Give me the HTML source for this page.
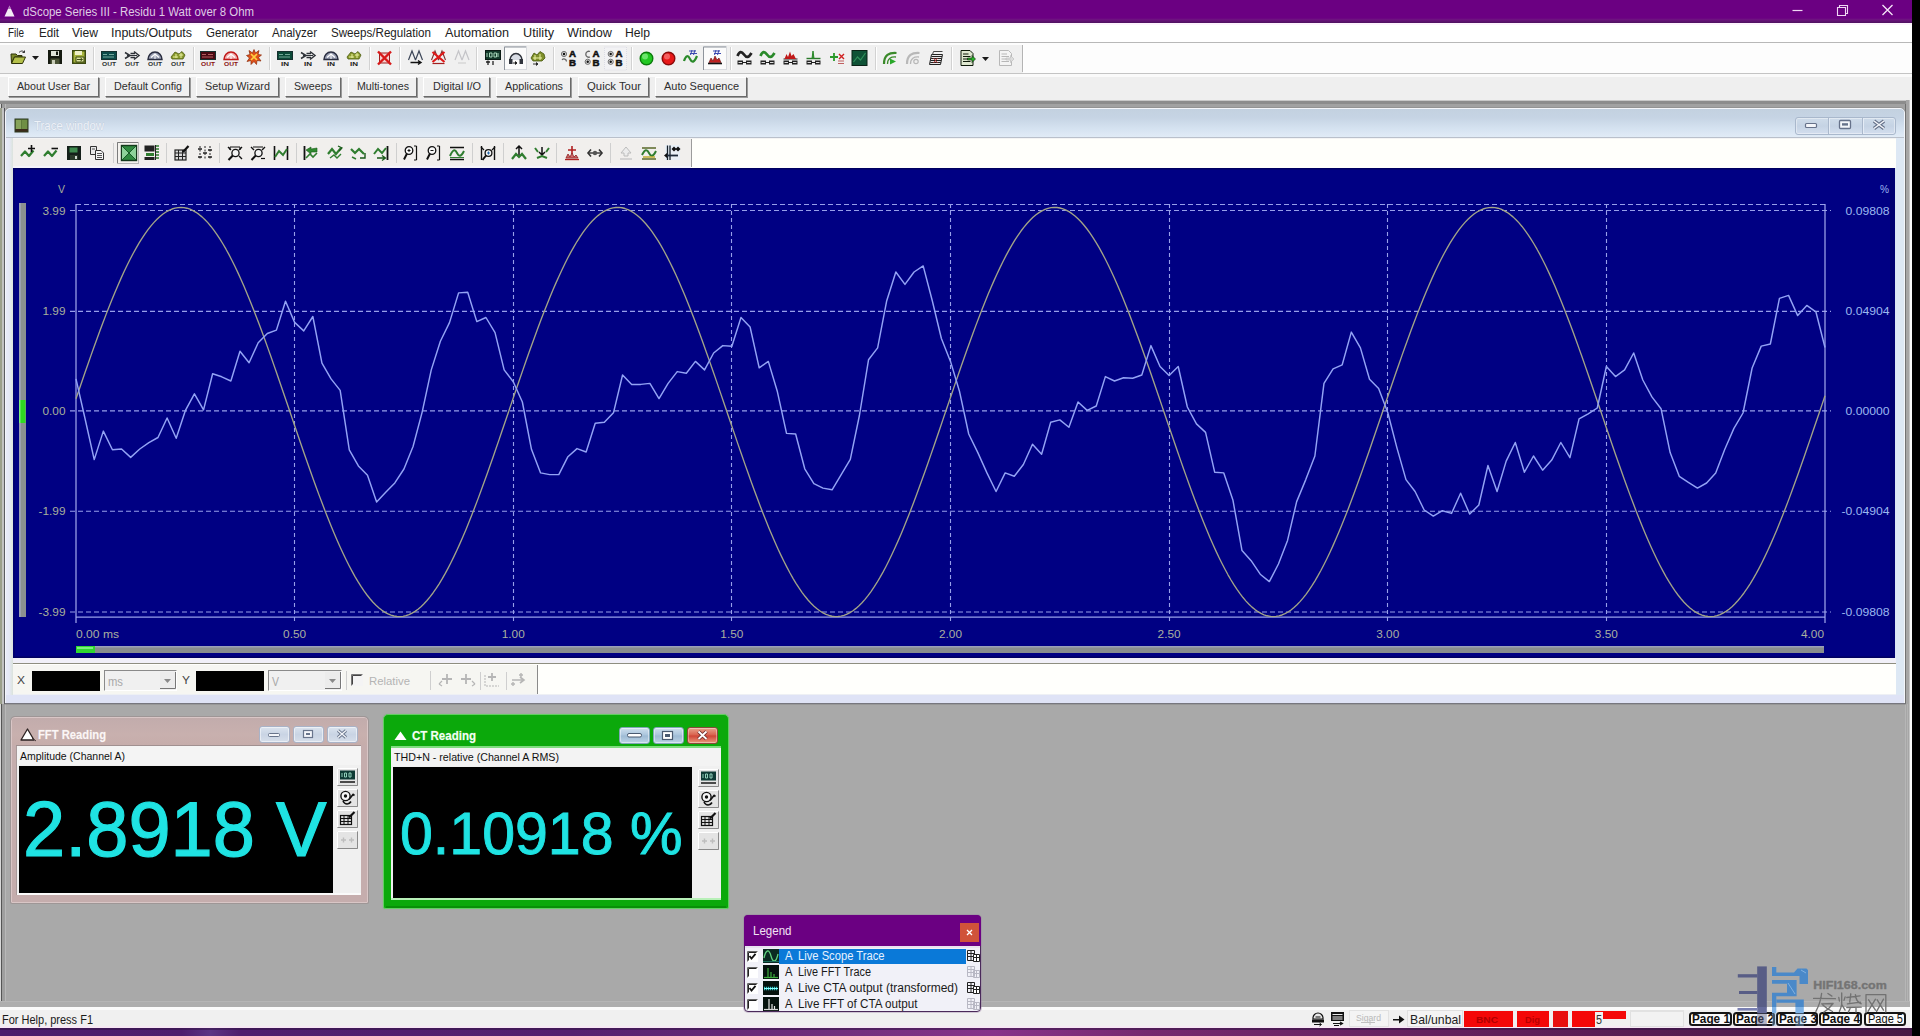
<!DOCTYPE html><html><head><meta charset="utf-8"><title>dScope Series III</title><style>
*{box-sizing:border-box;margin:0;padding:0}
html,body{width:1920px;height:1036px;overflow:hidden;background:#ababab}
body{font-family:"Liberation Sans",sans-serif;font-size:12px;color:#000;position:relative}
.a{position:absolute}
.t{position:absolute;white-space:nowrap;line-height:1}
svg{position:absolute;overflow:visible}

.ub{position:absolute;top:77px;height:20px;background:#f0f0f0;border:1px solid;border-color:#fff #6a6a6a #6a6a6a #fff;box-shadow:1px 1px 0 #9a9a9a}
</style></head><body>
<div class="a" style="left:0px;top:0px;width:1912px;height:23px;background:#6b0082"></div><div class="a" style="left:0;top:18px;width:1912px;height:5px;background:linear-gradient(180deg,#6b0082,#6e1280 30%,#4e1260 100%)"></div><svg style="left:0px;top:0px" width="30" height="22" viewBox="0 0 30 22"><path d="M9.5 5.5 L14.5 16.5 L4.5 16.5 Z" fill="#f4eaf6"/><path d="M9.5 5.5 L11 9 L8 9Z" fill="#6b0082" opacity=".5"/></svg><svg style="left:21px;top:1.6px" width="239" height="21" font-family="Liberation Sans, sans-serif"><text x="2" y="14.4" font-size="12" fill="#dfcce4" textLength="231" lengthAdjust="spacingAndGlyphs">dScope Series III - Residu 1 Watt over 8 Ohm</text></svg><svg style="left:1780px;top:0px" width="132" height="22" viewBox="0 0 132 22"><path d="M12.5 10.5 H22.5" stroke="#f0d8f4" stroke-width="1.2" fill="none"/><path d="M57.5 7.5 H65.5 V15.5 H57.5 Z M59.5 7.5 V5.5 H67.5 V13.5 H65.5" stroke="#f0d8f4" stroke-width="1.1" fill="none"/><path d="M102.5 5 L112.5 15 M112.5 5 L102.5 15" stroke="#f6e6f8" stroke-width="1.3" fill="none"/></svg><div class="a" style="left:1910px;top:100px;width:2px;height:928px;background:#fafafa"></div><div class="a" style="left:1912px;top:0px;width:8px;height:1036px;background:#000"></div><div class="a" style="left:0;top:1028px;width:1912px;height:8px;background:linear-gradient(90deg,#4c1c6c 0,#4f1e6e 9.5%,#5c3584 11%,#4f1e6e 12.5%,#55206f 30%,#74307e 45%,#87338a 52%,#76296f 60%,#5e1e58 80%,#4a1844 100%)"></div><div class="a" style="left:0px;top:1028px;width:1912px;height:2px;background:rgba(50,20,70,.55)"></div>
<div class="a" style="left:0px;top:23px;width:1912px;height:20px;background:#ffffff"></div><div class="a" style="left:0px;top:23px;width:1912px;height:2px;background:#fdf4fd"></div><svg style="left:6px;top:22.6px" width="24" height="21" font-family="Liberation Sans, sans-serif"><text x="2" y="14.4" font-size="12" fill="#222" textLength="16" lengthAdjust="spacingAndGlyphs">File</text></svg><svg style="left:37px;top:22.6px" width="28" height="21" font-family="Liberation Sans, sans-serif"><text x="2" y="14.4" font-size="12" fill="#222" textLength="20" lengthAdjust="spacingAndGlyphs">Edit</text></svg><svg style="left:70px;top:22.6px" width="34" height="21" font-family="Liberation Sans, sans-serif"><text x="2" y="14.4" font-size="12" fill="#222" textLength="26" lengthAdjust="spacingAndGlyphs">View</text></svg><svg style="left:109px;top:22.6px" width="89" height="21" font-family="Liberation Sans, sans-serif"><text x="2" y="14.4" font-size="12" fill="#222" textLength="81" lengthAdjust="spacingAndGlyphs">Inputs/Outputs</text></svg><svg style="left:204px;top:22.6px" width="60" height="21" font-family="Liberation Sans, sans-serif"><text x="2" y="14.4" font-size="12" fill="#222" textLength="52" lengthAdjust="spacingAndGlyphs">Generator</text></svg><svg style="left:270px;top:22.6px" width="53" height="21" font-family="Liberation Sans, sans-serif"><text x="2" y="14.4" font-size="12" fill="#222" textLength="45" lengthAdjust="spacingAndGlyphs">Analyzer</text></svg><svg style="left:329px;top:22.6px" width="108" height="21" font-family="Liberation Sans, sans-serif"><text x="2" y="14.4" font-size="12" fill="#222" textLength="100" lengthAdjust="spacingAndGlyphs">Sweeps/Regulation</text></svg><svg style="left:443px;top:22.6px" width="72" height="21" font-family="Liberation Sans, sans-serif"><text x="2" y="14.4" font-size="12" fill="#222" textLength="64" lengthAdjust="spacingAndGlyphs">Automation</text></svg><svg style="left:521px;top:22.6px" width="39" height="21" font-family="Liberation Sans, sans-serif"><text x="2" y="14.4" font-size="12" fill="#222" textLength="31" lengthAdjust="spacingAndGlyphs">Utility</text></svg><svg style="left:565px;top:22.6px" width="53" height="21" font-family="Liberation Sans, sans-serif"><text x="2" y="14.4" font-size="12" fill="#222" textLength="45" lengthAdjust="spacingAndGlyphs">Window</text></svg><svg style="left:623px;top:22.6px" width="33" height="21" font-family="Liberation Sans, sans-serif"><text x="2" y="14.4" font-size="12" fill="#222" textLength="25" lengthAdjust="spacingAndGlyphs">Help</text></svg><div class="a" style="left:0px;top:42px;width:1912px;height:1px;background:#b8b8b8"></div>
<div class="a" style="left:0px;top:43px;width:1912px;height:31px;background:#fdfdfd"></div><div class="a" style="left:0px;top:45px;width:1023px;height:28px;background:#f0f0f0"></div><div class="a" style="left:0px;top:73px;width:1912px;height:1px;background:#c4c4c4"></div><div class="a" style="left:0px;top:74px;width:1912px;height:3px;background:#fafafa"></div><svg style="left:0;top:0" width="1100" height="76" viewBox="0 0 1100 76" font-family="Liberation Sans, sans-serif"><g transform="translate(10,49)"><path d="M1 5 H6 L7.5 6.5 H12 V8 H4.5 L1.5 14 Z" fill="#7c8a2a" stroke="#2e3408" stroke-width="1"/><path d="M4.5 8 H15.5 L12.5 14.5 H1.5 Z" fill="#b4c04a" stroke="#2e3408" stroke-width="1"/><path d="M9 3.5 C11 1.5 13 1.5 14.5 3.5 M14.5 3.5 V1.5 M14.5 3.5 H12.5" stroke="#333" stroke-width="1" fill="none"/></g><g transform="translate(32,50)"><path d="M0 6 H7 L3.5 10 Z" fill="#1a1a1a"/></g><g transform="translate(47,49)"><rect x="1" y="1" width="14" height="14" fill="#151a10"/><rect x="4" y="2" width="8" height="5" fill="#dfe4d8"/><rect x="9" y="2.5" width="2" height="3.5" fill="#151a10"/><rect x="3.5" y="9.5" width="9" height="5.5" fill="#4a5236"/><rect x="5" y="11" width="3" height="4" fill="#c8ccb8"/></g><g transform="translate(71,49)"><rect x="1" y="1" width="14" height="14" fill="#3c4a12"/><rect x="2.5" y="2.5" width="11" height="11" fill="#a6b43c"/><rect x="4" y="2" width="7" height="4" fill="#eef0c8"/><path d="M5 8 H13 V13 H5Z" fill="#dfe6a0" stroke="#3c4a12" stroke-width="1"/><path d="M6 10.5 H11 M9.5 9 L11.5 10.5 L9.5 12" stroke="#3c4a12" stroke-width="1" fill="none"/></g><path d="M93.5 47 V70" stroke="#d2d2d2" stroke-width="1"/><path d="M94.5 47 V70" stroke="#fff" stroke-width="1"/><g transform="translate(101,50)"><rect x="0.5" y="1.5" width="15" height="8" fill="#0c4a48" stroke="#16302e" stroke-width="1"/><path d="M2 4.5 H6 M8 4.5 H13 M2 7 H13" stroke="#9fd0c0" stroke-width="1" opacity=".7"/><text x="1" y="15.5" font-size="6.2" font-weight="bold" fill="#2c3030" textLength="14" lengthAdjust="spacingAndGlyphs">OUT</text></g><g transform="translate(124,50)"><path d="M1 2.5 L6 5.5 L1 8.5 M6.5 3.5 H11 M6.5 7.5 H11 M10 1.5 L15 5.5 L10 9.5" stroke="#2e3238" stroke-width="1.5" fill="none"/><path d="M3 5.5 H13" stroke="#2e3238" stroke-width="1"/><text x="1" y="15.5" font-size="6.2" font-weight="bold" fill="#2c3030" textLength="14" lengthAdjust="spacingAndGlyphs">OUT</text></g><g transform="translate(147,50)"><path d="M1 9.5 A7 7.5 0 0 1 15 9.5 Z" fill="#9aa0b4" stroke="#2a2e40" stroke-width="1.5"/><path d="M4 7.5 L8 4 L12 7.5" stroke="#fff" stroke-width="1.1" fill="none"/><path d="M8 9 V5" stroke="#fff" stroke-width="1"/><text x="1" y="15.5" font-size="6.2" font-weight="bold" fill="#2c3030" textLength="14" lengthAdjust="spacingAndGlyphs">OUT</text></g><g transform="translate(170,50)"><path d="M1 7 L5 2 L9 4 L12 1.5 L15 5 L13 9 H2 Z" fill="#8a9a2e" stroke="#4a5a10" stroke-width=".8"/><path d="M3 7 H8 M9 5 H13 M6 4 V8 M11 3 V8" stroke="#e8f0a0" stroke-width="1"/><text x="1" y="15.5" font-size="6.2" font-weight="bold" fill="#2c3030" textLength="14" lengthAdjust="spacingAndGlyphs">OUT</text></g><path d="M193.5 47 V70" stroke="#d2d2d2" stroke-width="1"/><path d="M194.5 47 V70" stroke="#fff" stroke-width="1"/><g transform="translate(200,50)"><rect x="0.5" y="1.5" width="15" height="8" fill="#4a0a12" stroke="#16302e" stroke-width="1"/><path d="M2 4.5 H6 M8 4.5 H13 M2 7 H13" stroke="#e08080" stroke-width="1" opacity=".7"/><text x="1" y="15.5" font-size="6.2" font-weight="bold" fill="#8a1010" textLength="14" lengthAdjust="spacingAndGlyphs">OUT</text></g><g transform="translate(223,50)"><path d="M1 9.5 A7 7.5 0 0 1 15 9.5 Z" fill="#f0b0b0" stroke="#c01818" stroke-width="1.5"/><path d="M4 7.5 L8 4 L12 7.5" stroke="#fff" stroke-width="1.1" fill="none"/><path d="M8 9 V5" stroke="#fff" stroke-width="1"/><text x="1" y="15.5" font-size="6.2" font-weight="bold" fill="#8a1010" textLength="14" lengthAdjust="spacingAndGlyphs">OUT</text></g><g transform="translate(246,49)"><path d="M8 0.5 L9.5 4 L13 1.5 L12 5.5 L15.5 6 L12.5 8.5 L15 12 L11 11.5 L10.5 15.5 L8 12.5 L5 15.5 L5 11.5 L1 12.5 L3.5 9 L0.5 6.5 L4 5.5 L3 1.5 L6.5 4 Z" fill="#e0501a" stroke="#8a2a08" stroke-width=".7"/><path d="M5 5 L11 11 M11 5 L5 11" stroke="#ffd040" stroke-width="1.6"/></g><path d="M269.5 47 V70" stroke="#d2d2d2" stroke-width="1"/><path d="M270.5 47 V70" stroke="#fff" stroke-width="1"/><g transform="translate(277,50)"><rect x="0.5" y="1.5" width="15" height="8" fill="#0c4a38" stroke="#16302e" stroke-width="1"/><path d="M2 4.5 H6 M8 4.5 H13 M2 7 H13" stroke="#9fd0c0" stroke-width="1" opacity=".7"/><text x="4" y="15.5" font-size="6.2" font-weight="bold" fill="#1c2420" textLength="8" lengthAdjust="spacingAndGlyphs">IN</text></g><g transform="translate(300,50)"><path d="M1 2.5 L6 5.5 L1 8.5 M6.5 3.5 H11 M6.5 7.5 H11 M10 1.5 L15 5.5 L10 9.5" stroke="#2e3238" stroke-width="1.5" fill="none"/><path d="M3 5.5 H13" stroke="#2e3238" stroke-width="1"/><text x="4" y="15.5" font-size="6.2" font-weight="bold" fill="#1c2420" textLength="8" lengthAdjust="spacingAndGlyphs">IN</text></g><g transform="translate(323,50)"><path d="M1 9.5 A7 7.5 0 0 1 15 9.5 Z" fill="#9aa0b4" stroke="#2a2e40" stroke-width="1.5"/><path d="M4 7.5 L8 4 L12 7.5" stroke="#fff" stroke-width="1.1" fill="none"/><path d="M8 9 V5" stroke="#fff" stroke-width="1"/><text x="4" y="15.5" font-size="6.2" font-weight="bold" fill="#1c2420" textLength="8" lengthAdjust="spacingAndGlyphs">IN</text></g><g transform="translate(346,50)"><path d="M1 7 L5 2 L9 4 L12 1.5 L15 5 L13 9 H2 Z" fill="#8a9a2e" stroke="#4a5a10" stroke-width=".8"/><path d="M3 7 H8 M9 5 H13 M6 4 V8 M11 3 V8" stroke="#e8f0a0" stroke-width="1"/><text x="4" y="15.5" font-size="6.2" font-weight="bold" fill="#1c2420" textLength="8" lengthAdjust="spacingAndGlyphs">IN</text></g><path d="M369.5 47 V70" stroke="#d2d2d2" stroke-width="1"/><path d="M370.5 47 V70" stroke="#fff" stroke-width="1"/><g transform="translate(376.5,50)"><rect x="3" y="3" width="10" height="10" fill="#f4d0d0" stroke="#a02020" stroke-width="1"/><path d="M1.5 1.5 L14.5 14.5 M14.5 1.5 L1.5 14.5" stroke="#d81818" stroke-width="2.4"/></g><path d="M399.5 47 V70" stroke="#d2d2d2" stroke-width="1"/><path d="M400.5 47 V70" stroke="#fff" stroke-width="1"/><g transform="translate(407.5,49)"><path d="M1 11 L4.5 2 L8 11 M8 11 L11.5 2 L15 11" stroke="#3c4658" stroke-width="1.2" fill="none"/><path d="M3 13.5 H13 M10.5 11.5 L13.5 13.5 L10.5 15.5" stroke="#111" stroke-width="1.4" fill="none"/></g><g transform="translate(430.5,49)"><path d="M1 11 L4.5 2 L8 11 M8 11 L11.5 2 L15 11" stroke="#7a3030" stroke-width="1.1" fill="none"/><path d="M2 3 L14 13 M14 3 L2 13" stroke="#e01818" stroke-width="2.2"/><path d="M2 14.5 H14" stroke="#a02020" stroke-width="1.2"/></g><g transform="translate(454,49)"><path d="M1 11 L4.5 2 L8 11 M8 11 L11.5 2 L15 11" stroke="#c4c4c8" stroke-width="1.2" fill="none"/><path d="M4 14 H12" stroke="#d0d0d0" stroke-width="1.2"/></g><path d="M476.5 47 V70" stroke="#d2d2d2" stroke-width="1"/><path d="M477.5 47 V70" stroke="#fff" stroke-width="1"/><g transform="translate(485,50)"><rect x="0.5" y="0.5" width="15" height="9" fill="#123a2a" stroke="#0a1a14" stroke-width="1"/><path d="M2 3 V7 M4.5 3 H7 V7 H4.5 Z M9 3 H11.5 V7 H9 Z M13 3 V7" stroke="#b8e8c8" stroke-width=".9" fill="none"/><path d="M1 12 H5 M3 10.5 V15 M8 11 V15" stroke="#222" stroke-width="1.3"/></g><rect x="504.5" y="46.5" width="22" height="23" fill="#fbfbfb" stroke="#d8dade" stroke-width="1"/><path d="M504.5 70 V47 H526" stroke="#8e949c" stroke-width="1" fill="none"/><g transform="translate(508,50)"><path d="M2 10 A6 6.5 0 0 1 14 10" stroke="#30343c" stroke-width="1.5" fill="#d8dce4"/><rect x="1" y="9" width="3.5" height="5" fill="#30343c"/><rect x="11.5" y="9" width="3.5" height="5" fill="#30343c"/><path d="M5 13 H9 M7 11.5 L9 13 L7 14.5" stroke="#222" stroke-width="1"/></g><g transform="translate(530,50)"><path d="M1 8 L4 3 L7 5 L10 1.5 L14 4 L15 8 L12 11 H3 Z" fill="#7f8f2a" stroke="#48580c" stroke-width=".8"/><path d="M3 8 H12 M5 5 V10 M10 4 V10" stroke="#eef4a8" stroke-width="1"/><path d="M3 14 H8 M6 12.5 L8 14 L6 15.5" stroke="#333" stroke-width="1"/></g><path d="M553.5 47 V70" stroke="#d2d2d2" stroke-width="1"/><path d="M554.5 47 V70" stroke="#fff" stroke-width="1"/><g transform="translate(560.5,50)"><circle cx="3.5" cy="4" r="2.6" fill="#d8d8d8" stroke="#555" stroke-width=".8"/><circle cx="3.5" cy="4" r="1.2" fill="#111"/><path d="M1.5 10 A2.5 2.5 0 0 1 6 11.5" stroke="#666" stroke-width="1.2" fill="none"/><text x="8.5" y="7.3" font-size="8.5" font-weight="bold" fill="#111" stroke="#111" stroke-width=".5" textLength="7" lengthAdjust="spacingAndGlyphs">A</text><text x="8.5" y="15.6" font-size="8.5" font-weight="bold" fill="#111" stroke="#111" stroke-width=".5" textLength="7" lengthAdjust="spacingAndGlyphs">B</text></g><g transform="translate(584,50)"><path d="M6 1.5 A3 3 0 1 0 6 7" stroke="#666" stroke-width="1.3" fill="none"/><circle cx="3.7" cy="11.8" r="2.6" fill="#d8d8d8" stroke="#555" stroke-width=".8"/><circle cx="3.7" cy="11.8" r="1.2" fill="#111"/><text x="8.5" y="7.3" font-size="8.5" font-weight="bold" fill="#111" stroke="#111" stroke-width=".5" textLength="7" lengthAdjust="spacingAndGlyphs">A</text><text x="8.5" y="15.6" font-size="8.5" font-weight="bold" fill="#111" stroke="#111" stroke-width=".5" textLength="7" lengthAdjust="spacingAndGlyphs">B</text></g><rect x="604.5" y="47" width="22" height="23" fill="#f2f2f4" stroke="#dcdce4" stroke-width="1" stroke-dasharray="1 1"/><g transform="translate(607,50)"><circle cx="3.7" cy="4" r="2.6" fill="#d8d8d8" stroke="#555" stroke-width=".8"/><circle cx="3.7" cy="4" r="1.2" fill="#111"/><circle cx="3.7" cy="11.8" r="2.6" fill="#d8d8d8" stroke="#555" stroke-width=".8"/><circle cx="3.7" cy="11.8" r="1.2" fill="#111"/><text x="8.5" y="7.3" font-size="8.5" font-weight="bold" fill="#111" stroke="#111" stroke-width=".5" textLength="7" lengthAdjust="spacingAndGlyphs">A</text><text x="8.5" y="15.6" font-size="8.5" font-weight="bold" fill="#111" stroke="#111" stroke-width=".5" textLength="7" lengthAdjust="spacingAndGlyphs">B</text></g><path d="M631.5 47 V70" stroke="#d2d2d2" stroke-width="1"/><path d="M632.5 47 V70" stroke="#fff" stroke-width="1"/><g transform="translate(638.5,50)"><circle cx="8" cy="8.5" r="6.3" fill="#22c822" stroke="#0a7a0a" stroke-width="1.4"/><circle cx="6.5" cy="6.5" r="3" fill="#a8ffa8" opacity=".55"/></g><g transform="translate(660.5,50)"><circle cx="8" cy="8.5" r="6.3" fill="#e81818" stroke="#8a0a0a" stroke-width="1.4"/><circle cx="6.5" cy="6.5" r="3" fill="#ff9a9a" opacity=".55"/></g><g transform="translate(683,49)"><path d="M1 12 C3 6 5 6 7 10 S11 14 14 7" stroke="#2a8a2a" stroke-width="2.2" fill="none"/><path d="M6 2 H13 M7 4.5 H14 M9 1 L7.5 6 M12 1 L10.5 6" stroke="#3a48b0" stroke-width="1"/></g><rect x="703.5" y="46.5" width="23" height="23" fill="#fbfbfb" stroke="#d8dade" stroke-width="1"/><path d="M703.5 70 V47 H726" stroke="#8e949c" stroke-width="1" fill="none"/><g transform="translate(707,49)"><path d="M1 14.5 H15" stroke="#111" stroke-width="1.6"/><path d="M2 13.5 L4 9 L6 12 L8 7 L10 11 L12 9 L14 13.5 Z" fill="#c02020" stroke="#601010" stroke-width=".6"/><path d="M6 2 H13 M7 4.5 H14 M9 1 L7.5 6 M12 1 L10.5 6" stroke="#3a48b0" stroke-width="1"/></g><path d="M730.5 47 V70" stroke="#d2d2d2" stroke-width="1"/><path d="M731.5 47 V70" stroke="#fff" stroke-width="1"/><g transform="translate(736.5,50)"><path d="M1 6 C3 1 5 1 7.5 4.5 S12 8 15 3" stroke="#222" stroke-width="2.7" fill="none"/><rect x="1" y="10.5" width="5.5" height="4" fill="#222"/><rect x="9.5" y="10.5" width="5.5" height="4" fill="#222"/><path d="M2 12.5 H5.5 M10.5 12.5 H14" stroke="#ddd" stroke-width="1"/><path d="M6.5 12.5 H9.5" stroke="#222"/></g><g transform="translate(759.5,50)"><path d="M1 6 C3 1 5 1 7.5 4.5 S12 8 15 3" stroke="#2a8a2a" stroke-width="2.7" fill="none"/><rect x="1" y="10.5" width="5.5" height="4" fill="#222"/><rect x="9.5" y="10.5" width="5.5" height="4" fill="#222"/><path d="M2 12.5 H5.5 M10.5 12.5 H14" stroke="#ddd" stroke-width="1"/><path d="M6.5 12.5 H9.5" stroke="#222"/></g><g transform="translate(782.5,50)"><path d="M1 9 H15" stroke="#222" stroke-width="1"/><path d="M2 9 L4 4 L5.5 7 L7.5 1.5 L9 6 L11 4 L13.5 9 Z" fill="#c01818"/><rect x="1" y="10.5" width="5.5" height="4" fill="#222"/><rect x="9.5" y="10.5" width="5.5" height="4" fill="#222"/><path d="M2 12.5 H5.5 M10.5 12.5 H14" stroke="#ddd" stroke-width="1"/><path d="M6.5 12.5 H9.5" stroke="#222"/></g><g transform="translate(805.5,50)"><path d="M1 8.5 H15" stroke="#2a7a2a" stroke-width="1.4"/><path d="M6.5 8.5 L7.5 1 L8.5 8.5 Z" fill="#2a8a2a" stroke="#2a8a2a"/><rect x="1" y="10.5" width="5.5" height="4" fill="#222"/><rect x="9.5" y="10.5" width="5.5" height="4" fill="#222"/><path d="M2 12.5 H5.5 M10.5 12.5 H14" stroke="#ddd" stroke-width="1"/><path d="M6.5 12.5 H9.5" stroke="#222"/></g><g transform="translate(829,50)"><path d="M1 7 H9 M5 3 V11" stroke="#2a9a2a" stroke-width="1.8"/><path d="M10 4 L15 9 M15 4 L10 9" stroke="#d02020" stroke-width="1.4"/><path d="M9 11 H15 M9 13.5 H15" stroke="#c06060" stroke-width="1"/></g><g transform="translate(851.5,50)"><rect x="0.5" y="0.5" width="15" height="15" fill="#0f5236" stroke="#0a2216" stroke-width="1"/><path d="M2 12 L6 7 L9 10 L14 3" stroke="#2f8f5a" stroke-width="1.2" fill="none"/></g><path d="M875.5 47 V70" stroke="#d2d2d2" stroke-width="1"/><path d="M876.5 47 V70" stroke="#fff" stroke-width="1"/><g transform="translate(882,50)"><path d="M2 14 C2 5 7 2.5 14.5 3" stroke="#3a8a2a" stroke-width="2.2" fill="none"/><path d="M5.5 14 C5.5 8.5 9 6.5 14 7" stroke="#3a8a2a" stroke-width="1.3" fill="none"/><path d="M8 8.5 L14 11.5 L8 14.5 Z" fill="#2aa82a"/></g><g transform="translate(905,50)"><path d="M2 14 C2 5 7 2.5 14.5 3" stroke="#b8b8b8" stroke-width="2.2" fill="none"/><path d="M5.5 14 C5.5 8.5 9 6.5 14 7" stroke="#b8b8b8" stroke-width="1.3" fill="none"/><circle cx="11" cy="11.5" r="2.2" fill="none" stroke="#b8b8b8" stroke-width="1.2"/></g><g transform="translate(927.5,50)"><path d="M2 14.5 L4 4.5 H15 L13 14.5 Z" fill="#e8e8e8" stroke="#222" stroke-width="1"/><path d="M4 6.5 H14.5 M3.6 8.5 H14 M3.2 10.5 H13.6 M2.8 12.5 H13.2" stroke="#222" stroke-width="1"/><path d="M5 4.5 L6 1.5 H15" stroke="#444" fill="none"/><path d="M6 8 L10 13 M10 8 L6 13" stroke="#b03030" stroke-width="1"/></g><path d="M951.5 47 V70" stroke="#d2d2d2" stroke-width="1"/><path d="M952.5 47 V70" stroke="#fff" stroke-width="1"/><g transform="translate(959.5,50)"><path d="M1.5 0.5 H10.5 L13.5 3.5 V15.5 H1.5 Z" fill="#dfe8d0" stroke="#0e1a0a" stroke-width="1"/><path d="M3.5 4 H9 M3.5 6.5 H11 M3.5 9 H11 M3.5 11.5 H11" stroke="#0e1a0a" stroke-width="1"/><path d="M8 8 H12.5 V5.5 L16 9 L12.5 12.5 V10 H8 Z" fill="#27b027" stroke="#0e1a0a" stroke-width=".6"/></g><g transform="translate(982,51)"><path d="M0 6 H7 L3.5 10 Z" fill="#1a1a1a"/></g><g transform="translate(998,50)"><path d="M1.5 0.5 H10.5 L13.5 3.5 V15.5 H1.5 Z" fill="#f4f4f4" stroke="#b8b8b8" stroke-width="1"/><path d="M3.5 4 H9 M3.5 6.5 H11 M3.5 9 H11 M3.5 11.5 H11" stroke="#b8b8b8" stroke-width="1"/><path d="M8 8 H12.5 V5.5 L16 9 L12.5 12.5 V10 H8 Z" fill="#dcdcdc" stroke="#b8b8b8" stroke-width=".6"/></g><path d="M1022.5 45 V72" stroke="#b4b4b4" stroke-width="1"/><path d="M1023.5 45 V72" stroke="#fff" stroke-width="1"/></svg>
<div class="a" style="left:0px;top:77px;width:1912px;height:23px;background:#efefef"></div><div class="ub" style="left:8px;width:91px"></div><svg style="left:15px;top:77.3px" width="81" height="19" font-family="Liberation Sans, sans-serif"><text x="2" y="13.2" font-size="11" fill="#2e2e2e" textLength="73" lengthAdjust="spacingAndGlyphs">About User Bar</text></svg><div class="ub" style="left:105px;width:85px"></div><svg style="left:111.5px;top:77.3px" width="76" height="19" font-family="Liberation Sans, sans-serif"><text x="2" y="13.2" font-size="11" fill="#2e2e2e" textLength="68" lengthAdjust="spacingAndGlyphs">Default Config</text></svg><div class="ub" style="left:196px;width:83px"></div><svg style="left:203px;top:77.3px" width="73" height="19" font-family="Liberation Sans, sans-serif"><text x="2" y="13.2" font-size="11" fill="#2e2e2e" textLength="65" lengthAdjust="spacingAndGlyphs">Setup Wizard</text></svg><div class="ub" style="left:285px;width:56px"></div><svg style="left:292px;top:77.3px" width="46" height="19" font-family="Liberation Sans, sans-serif"><text x="2" y="13.2" font-size="11" fill="#2e2e2e" textLength="38" lengthAdjust="spacingAndGlyphs">Sweeps</text></svg><div class="ub" style="left:348px;width:69px"></div><svg style="left:354.5px;top:77.3px" width="60" height="19" font-family="Liberation Sans, sans-serif"><text x="2" y="13.2" font-size="11" fill="#2e2e2e" textLength="52" lengthAdjust="spacingAndGlyphs">Multi-tones</text></svg><div class="ub" style="left:423px;width:67px"></div><svg style="left:430.5px;top:77.3px" width="56" height="19" font-family="Liberation Sans, sans-serif"><text x="2" y="13.2" font-size="11" fill="#2e2e2e" textLength="48" lengthAdjust="spacingAndGlyphs">Digital I/O</text></svg><div class="ub" style="left:496px;width:75px"></div><svg style="left:502.5px;top:77.3px" width="66" height="19" font-family="Liberation Sans, sans-serif"><text x="2" y="13.2" font-size="11" fill="#2e2e2e" textLength="58" lengthAdjust="spacingAndGlyphs">Applications</text></svg><div class="ub" style="left:578px;width:71px"></div><svg style="left:584.5px;top:77.3px" width="62" height="19" font-family="Liberation Sans, sans-serif"><text x="2" y="13.2" font-size="11" fill="#2e2e2e" textLength="54" lengthAdjust="spacingAndGlyphs">Quick Tour</text></svg><div class="ub" style="left:655px;width:92px"></div><svg style="left:661.5px;top:77.3px" width="83" height="19" font-family="Liberation Sans, sans-serif"><text x="2" y="13.2" font-size="11" fill="#2e2e2e" textLength="75" lengthAdjust="spacingAndGlyphs">Auto Sequence</text></svg>
<div class="a" style="left:0px;top:100px;width:1910px;height:908px;background:#a9a9a9"></div><div class="a" style="left:0px;top:100px;width:1910px;height:1px;background:#c8c8c8"></div><div class="a" style="left:0px;top:101px;width:1910px;height:3px;background:#8c8c8c"></div><div class="a" style="left:0px;top:104px;width:1910px;height:4px;background:#a2a2a2"></div><div class="a" style="left:0px;top:104px;width:1px;height:904px;background:#d8d8d8"></div><div class="a" style="left:1px;top:104px;width:1px;height:904px;background:#555"></div><div class="a" style="left:2px;top:104px;width:3px;height:904px;background:#9e9e9e"></div><div class="a" style="left:5px;top:104px;width:1px;height:904px;background:#b8b8b8"></div><div class="a" style="left:0px;top:108px;width:1.5px;height:596px;background:#9ca08c"></div><div class="a" style="left:1.5px;top:108px;width:2.5px;height:596px;background:#c2c2c2"></div><div class="a" style="left:4px;top:108px;width:1px;height:596px;background:#4e4e58"></div><div class="a" style="left:1905px;top:104px;width:1px;height:600px;background:#707070"></div><div class="a" style="left:1905px;top:704px;width:1px;height:304px;background:#b6b6b6"></div><div class="a" style="left:1906px;top:100px;width:3px;height:908px;background:#a6a6a6"></div><div class="a" style="left:1907px;top:704px;width:1px;height:304px;background:#b4b4b4"></div><div class="a" style="left:1909px;top:100px;width:1px;height:908px;background:#c4c4c4"></div><div class="a" style="left:0px;top:1001px;width:1910px;height:1px;background:#b6b6b6"></div><div class="a" style="left:0px;top:1002px;width:1910px;height:5px;background:#aeaeae"></div>
<div class="a" style="left:5px;top:108px;width:1900px;height:596px;background:#dbe5f3;border:1px solid #f4f6fa;border-radius:5px 5px 0 0;box-shadow:0 0 0 1px rgba(120,120,120,.35)"></div><div class="a" style="left:6px;top:109px;width:1898px;height:29px;border-radius:4px 4px 0 0;background:linear-gradient(180deg,#c3d1e0 0,#c6d4e4 30%,#d6e3f1 70%,#e2ecf7 100%)"></div><div class="a" style="left:6px;top:137px;width:1898px;height:1px;background:#b9c0cb"></div><div class="a" style="left:6px;top:138px;width:7px;height:565px;background:linear-gradient(90deg,#e9ebfb 0,#e6e9f6 45%,#dbe3dc 100%)"></div><div class="a" style="left:1896px;top:138px;width:8px;height:565px;background:#dde8f4"></div><div class="a" style="left:6px;top:695px;width:1898px;height:8px;background:#dfe3f6"></div><div class="a" style="left:5px;top:703px;width:1900px;height:1px;background:#77777f"></div><svg style="left:14px;top:118px" width="16" height="16" viewBox="0 0 16 16"><rect x="1" y="1" width="13" height="13" fill="#5d7a3a"/><rect x="1" y="11" width="13" height="3" fill="#3a2a1a"/><rect x="2" y="2" width="5" height="9" fill="#86a35a"/><rect x="8" y="2" width="5" height="9" fill="#6f8f45"/><rect x="1" y="1" width="13" height="13" fill="none" stroke="#2e3a20" stroke-width="1"/></svg><svg style="left:32px;top:115.6px" width="78" height="21" font-family="Liberation Sans, sans-serif"><text x="2" y="14.4" font-size="12" fill="#eef2f8" textLength="70" lengthAdjust="spacingAndGlyphs" stroke="#b6c2d2" stroke-width=".5" paint-order="stroke">Trace window</text></svg><div class="a" style="left:1795px;top:117px;width:101px;height:18px;border:1px solid #a9b8cc;border-radius:3px;background:linear-gradient(180deg,#cfdcea,#c5d3e4 50%,#d3deee);box-shadow:inset 0 0 0 1px rgba(255,255,255,.4)"></div><div class="a" style="left:1827.5px;top:118px;width:1px;height:16px;background:#aab8cc"></div><div class="a" style="left:1828.5px;top:118px;width:1px;height:16px;background:#e4ecf6"></div><div class="a" style="left:1861.5px;top:118px;width:1px;height:16px;background:#aab8cc"></div><div class="a" style="left:1862.5px;top:118px;width:1px;height:16px;background:#e4ecf6"></div><svg style="left:1795px;top:117px" width="101" height="18" viewBox="0 0 101 18"><rect x="10.5" y="6.5" width="11" height="4" rx="1" fill="#f4f6fa" stroke="#66728a" stroke-width="1.2"/><rect x="44.5" y="3.5" width="11" height="8" rx="1" fill="#f4f6fa" stroke="#66728a" stroke-width="1.3"/><rect x="47" y="6.2" width="6" height="2.4" fill="#66728a"/><path d="M79 4 L89 11.5 M89 4 L79 11.5" stroke="#66728a" stroke-width="3.6" fill="none"/><path d="M79 4 L89 11.5 M89 4 L79 11.5" stroke="#f4f6fa" stroke-width="1.5" fill="none"/></svg><div class="a" style="left:13px;top:138px;width:1883px;height:30px;background:#fffffb"></div><div class="a" style="left:13px;top:138px;width:1883px;height:1px;background:#f4f4f4"></div><div class="a" style="left:13px;top:139px;width:678.5px;height:28px;background:#f1efed"></div><div class="a" style="left:691px;top:139px;width:1px;height:28px;background:#9c9c9c"></div><div class="a" style="left:13px;top:166px;width:678px;height:1.5px;background:#f4f3fa"></div><svg style="left:0;top:0" width="700" height="170" viewBox="0 0 700 170"><g transform="translate(20,145)"><path d="M1 11 L5 6.5 L9 11 L13.5 5.5" stroke="#2f7d2f" stroke-width="2.2" fill="none" stroke-linejoin="round"/><path d="M8 3.5 H15 M11.5 0 V7" stroke="#111" stroke-width="1.6"/></g><g transform="translate(43,145)"><path d="M1 11 L5 6.5 L9 11 L13.5 5.5" stroke="#2f7d2f" stroke-width="2.2" fill="none" stroke-linejoin="round"/><path d="M8.5 3.5 H15" stroke="#111" stroke-width="1.6"/></g><g transform="translate(66,145)"><rect x="1" y="1" width="14" height="14" fill="#15201a"/><rect x="3.5" y="2.5" width="8" height="5" fill="#3f8a4f"/><rect x="4" y="10" width="8" height="5" fill="#2a3a2a"/><rect x="9" y="11" width="2" height="3" fill="#cfd8cf"/></g><g transform="translate(89,145)"><path d="M1.5 1.5 H7.5 V9.5 H1.5 Z" fill="#e8e8e8" stroke="#333"/><path d="M6.5 5.5 H12 L14.5 8 V14.5 H6.5 Z" fill="#f4f4f4" stroke="#333"/><path d="M8 8.5 H13 M8 10.5 H13 M8 12.5 H13 M3 4 H6" stroke="#555" stroke-width="1"/></g><path d="M113.5 143 V163" stroke="#cfcfcf" stroke-width="1"/><rect x="117.5" y="142.5" width="21" height="21" fill="#f4f2ee" stroke="#b8b8b8"/><path d="M117.5 163 V142.5 H138" stroke="#7c7c7c" fill="none"/><g transform="translate(121,145)"><rect x="0.5" y="0.5" width="15" height="15" fill="#2f8a3f" stroke="#143a1c" stroke-width="1.4"/><path d="M1 1 L8 8 L1 15 Z M15 1 L8 8 L15 15 Z" fill="#9fdfaa" opacity=".85"/><path d="M1 1 L15 15 M15 1 L1 15" stroke="#1a5a2a" stroke-width="1"/></g><g transform="translate(144,145)"><rect x="0.5" y="0.5" width="10" height="6" fill="#222"/><rect x="2" y="8" width="8" height="3" fill="#2f7d2f"/><rect x="0.5" y="12" width="10" height="3" fill="#222"/><path d="M12 1 H15 M12 4 H15 M12 7 H15 M12 10 H15 M12 13 H15" stroke="#2f7d2f" stroke-width="1.6"/><path d="M11.5 0 V15" stroke="#222" stroke-width="1"/></g><path d="M166.5 143 V163" stroke="#cfcfcf" stroke-width="1"/><g transform="translate(174,145)"><rect x="1" y="5" width="11" height="10" fill="#d8d8d8" stroke="#222" stroke-width="1.2"/><path d="M1 8 H12 M1 11.5 H12 M4.5 5 V15 M8.5 5 V15" stroke="#222" stroke-width="1"/><path d="M9 7 L14.5 1" stroke="#111" stroke-width="2.2"/></g><g transform="translate(197,145)"><path d="M3 1 V15 M8 1 V15 M13 1 V15" stroke="#222" stroke-width="1" stroke-dasharray="2 1.5"/><path d="M1 4 H5 M6 8 H10 M11 5 H15 M1 12 H5 M11 12 H15" stroke="#222" stroke-width="1.4"/></g><path d="M219.5 143 V163" stroke="#cfcfcf" stroke-width="1"/><g transform="translate(227,145)"><path d="M1 2 L4 5 M15 2 L12 5 M15 14 L12 11" stroke="#111" stroke-width="1.4"/><path d="M3 2 H13 M3 2 V5 M13 2 V5" stroke="#111" stroke-width="1" fill="none"/><circle cx="8.5" cy="8" r="3.6" fill="#f4f4f4" stroke="#111" stroke-width="1.3"/><path d="M5.8 10.5 L1.5 15" stroke="#111" stroke-width="2"/></g><g transform="translate(250,145)"><path d="M1 2 L4 5 M15 2 L12 5" stroke="#111" stroke-width="1.4"/><path d="M3 2 H13" stroke="#111" stroke-width="1"/><circle cx="8.5" cy="8" r="3.6" fill="#f4f4f4" stroke="#111" stroke-width="1.3"/><path d="M5.8 10.5 L1.5 15" stroke="#111" stroke-width="2"/><path d="M11 13.5 H15" stroke="#111" stroke-width="1.2"/></g><g transform="translate(273,145)"><path d="M1.5 1 V15 M14.5 1 V15" stroke="#111" stroke-width="1.6"/><path d="M2 12 L6 6 L10 10 L14 4" stroke="#2f7d2f" stroke-width="2" fill="none"/></g><path d="M296.5 143 V163" stroke="#cfcfcf" stroke-width="1"/><g transform="translate(303,145)"><path d="M1.5 1 V15" stroke="#111" stroke-width="1.8"/><path d="M3 5 L8 2 V4 L14 3 V7 L8 7 V9 Z" fill="#2f8a2f" stroke="#1a5a1a" stroke-width=".6"/><path d="M3 13 L7 9 L10 12 L14 8" stroke="#2f7d2f" stroke-width="1.6" fill="none"/></g><g transform="translate(327,145)"><path d="M1 9 L5 4 L9 9 L14 3" stroke="#2f7d2f" stroke-width="2.2" fill="none"/><path d="M3 13 L7 10 L10 13 L14 9" stroke="#2f7d2f" stroke-width="1.4" fill="none"/><path d="M11 1 L15 3 L12 6" stroke="#1a5a1a" stroke-width="1.2" fill="none"/></g><g transform="translate(350,145)"><path d="M1 4 L5 8 L9 4 L14 9" stroke="#2f7d2f" stroke-width="2.2" fill="none"/><path d="M10 13 L15 13 L15 8" stroke="#1a5a1a" stroke-width="1.4" fill="none"/><path d="M2 12 L6 14" stroke="#2f7d2f" stroke-width="1.4"/></g><g transform="translate(373,145)"><path d="M14.5 1 V15" stroke="#111" stroke-width="1.8"/><path d="M1 9 L5 4 L9 8 L13 3" stroke="#2f7d2f" stroke-width="2" fill="none"/><path d="M4 13 H12 M9 10.5 L12.5 13 L9 15.5" stroke="#1a5a1a" stroke-width="1.3" fill="none"/></g><path d="M396.5 143 V163" stroke="#cfcfcf" stroke-width="1"/><g transform="translate(403,145)"><circle cx="6" cy="5.5" r="3.8" fill="#f8f8f8" stroke="#111" stroke-width="1.3"/><path d="M4 8.5 L1 14.5" stroke="#111" stroke-width="2"/><path d="M13.5 1 V15 M11 1 H13.5 M11 15 H13.5" stroke="#111" stroke-width="1.2" fill="none"/><path d="M4.5 5.5 H7.5 M6 4 V7" stroke="#111" stroke-width="1"/></g><g transform="translate(426,145)"><circle cx="6" cy="5.5" r="3.8" fill="#f8f8f8" stroke="#111" stroke-width="1.3"/><path d="M4 8.5 L1 14.5" stroke="#111" stroke-width="2"/><path d="M13.5 1 V15 M11 1 H13.5 M11 15 H13.5" stroke="#111" stroke-width="1.2" fill="none"/><path d="M4.5 5.5 H7.5" stroke="#111" stroke-width="1"/></g><g transform="translate(449,145)"><path d="M1 2.5 H15 M1 14.5 H15" stroke="#111" stroke-width="1.5"/><path d="M1 11 C4 4 6 4 8 8 S12 12 15 6" stroke="#2f7d2f" stroke-width="2" fill="none"/><path d="M1 12.5 H15" stroke="#2f7d2f" stroke-width="1"/></g><path d="M472.5 143 V163" stroke="#cfcfcf" stroke-width="1"/><g transform="translate(480,145)"><path d="M1.5 1 V15 M14.5 1 V15" stroke="#111" stroke-width="1.4"/><path d="M1 2 L4 5 M15 2 L12 5" stroke="#111" stroke-width="1.2"/><circle cx="8.5" cy="8" r="3.4" fill="#f4f4f4" stroke="#111" stroke-width="1.3"/><path d="M6 10.5 L2.5 15" stroke="#111" stroke-width="2"/><path d="M7 8 H10 M8.5 6.5 V9.5" stroke="#26a" stroke-width="1"/></g><path d="M503.5 143 V163" stroke="#cfcfcf" stroke-width="1"/><g transform="translate(511,145)"><path d="M8 1 V10 M5 4 L8 1 L11 4" stroke="#111" stroke-width="1.5" fill="none"/><path d="M1 14 L5 9 L8 12 L11 9 L15 14" stroke="#2f7d2f" stroke-width="2.2" fill="none"/></g><g transform="translate(534,145)"><path d="M8 10 V2 M5 7 L8 10 L11 7" stroke="#111" stroke-width="1.5" fill="none"/><path d="M1 3 L4 7 M15 3 L12 7" stroke="#2f7d2f" stroke-width="2"/><path d="M3 13 L8 11 L13 13" stroke="#2f7d2f" stroke-width="2" fill="none"/></g><path d="M556.5 143 V163" stroke="#cfcfcf" stroke-width="1"/><g transform="translate(564,145)"><path d="M8 1 V9 M4 5 H12" stroke="#b02020" stroke-width="1.6"/><path d="M1 14.5 H15" stroke="#b02020" stroke-width="1.4"/><path d="M2 13 L4 9 L6 12 L8 8 L10 12 L12 10 L14 13 Z" fill="#d06a6a" stroke="#8a2020" stroke-width=".8"/></g><g transform="translate(587,145)"><path d="M1 8 H15" stroke="#333" stroke-width="1.4"/><path d="M4 4.5 L1 8 L4 11.5 M12 4.5 L15 8 L12 11.5" stroke="#333" stroke-width="1.6" fill="none"/><circle cx="8" cy="8" r="2.2" fill="#555"/></g><path d="M610.5 143 V163" stroke="#cfcfcf" stroke-width="1"/><g transform="translate(618,145)"><path d="M8 2 L3 8 H6 V11 H10 V8 H13 Z" fill="#ececec" stroke="#bcbcbc" stroke-width="1"/><path d="M2 14 H14" stroke="#c8c8c8" stroke-width="1.4"/></g><g transform="translate(641,145)"><path d="M1 3 H15 M1 14 H15" stroke="#5a6a2a" stroke-width="1.4"/><path d="M1 10 C4 4 6 4 8 8 S12 12 15 6" stroke="#2f7d2f" stroke-width="2" fill="none"/><path d="M2 12 H14" stroke="#b8a820" stroke-width="1.4"/></g><g transform="translate(664,145)"><rect x="1" y="0" width="15" height="15" fill="#e4f0fa" opacity=".7"/><path d="M3.5 0.5 V15 M6 0.5 V15" stroke="#16202a" stroke-width="1.3"/><path d="M7.5 4 L10 1.5 L12.5 4 L10 6.5Z M11.5 4 L14 1.5 L16.5 4 L14 6.5Z" fill="#111"/><path d="M2 10.5 H14" stroke="#1c2a3a" stroke-width="1.8"/><path d="M0 10.5 L3 8 V13Z" fill="#111"/></g></svg><svg style="left:0;top:0" width="1912" height="700" viewBox="0 0 1912 700" font-family="Liberation Sans, sans-serif"><rect x="13" y="168" width="1882" height="490" fill="#000083"/><rect x="13" y="168" width="1882" height="1.5" fill="#000060"/><rect x="13" y="656.5" width="1882" height="1.5" fill="#000060"/><rect x="1890" y="168" width="5" height="490" fill="#000068" opacity=".7"/><rect x="13" y="168" width="2" height="490" fill="#000068" opacity=".7"/><path d="M76 204.5 H1825" stroke="#979fea" stroke-width="1.1" stroke-dasharray="5 3" fill="none"/><path d="M70 210.5 H1831" stroke="#979fea" stroke-width="1.1" stroke-dasharray="5 3" fill="none"/><path d="M70 311.4 H1831" stroke="#979fea" stroke-width="1.1" stroke-dasharray="5 3" fill="none"/><path d="M70 410.9 H1831" stroke="#979fea" stroke-width="1.1" stroke-dasharray="5 3" fill="none"/><path d="M70 511.2 H1831" stroke="#979fea" stroke-width="1.1" stroke-dasharray="5 3" fill="none"/><path d="M70 612 H1831" stroke="#979fea" stroke-width="1.1" stroke-dasharray="5 3" fill="none"/><path d="M76 617.2 H1825" stroke="#979fea" stroke-width="1.2" fill="none"/><path d="M294.5 204 V623" stroke="#979fea" stroke-width="1.1" stroke-dasharray="4 3" fill="none"/><path d="M513.5 204 V623" stroke="#979fea" stroke-width="1.1" stroke-dasharray="4 3" fill="none"/><path d="M731.5 204 V623" stroke="#979fea" stroke-width="1.1" stroke-dasharray="4 3" fill="none"/><path d="M950.5 204 V623" stroke="#979fea" stroke-width="1.1" stroke-dasharray="4 3" fill="none"/><path d="M1169.5 204 V623" stroke="#979fea" stroke-width="1.1" stroke-dasharray="4 3" fill="none"/><path d="M1387.5 204 V623" stroke="#979fea" stroke-width="1.1" stroke-dasharray="4 3" fill="none"/><path d="M1606.5 204 V623" stroke="#979fea" stroke-width="1.1" stroke-dasharray="4 3" fill="none"/><path d="M76 204 V623" stroke="#a4abee" stroke-width="1.2" fill="none"/><path d="M1825 204 V623" stroke="#a4abee" stroke-width="1.2" fill="none"/><polyline points="76,398.77 79,389.98 82,381.23 85,372.54 88,363.92 91,355.38 94,346.96 97,338.66 100,330.49 103,322.47 106,314.62 109,306.95 112,299.48 115,292.22 118,285.17 121,278.37 124,271.81 127,265.52 130,259.49 133,253.75 136,248.31 139,243.17 142,238.34 145,233.84 148,229.67 151,225.83 154,222.35 157,219.21 160,216.44 163,214.03 166,211.98 169,210.31 172,209.02 175,208.1 178,207.56 181,207.4 184,207.62 187,208.23 190,209.21 193,210.57 196,212.3 199,214.4 202,216.88 205,219.71 208,222.9 211,226.45 214,230.34 217,234.57 220,239.12 223,244 226,249.2 229,254.69 232,260.48 235,266.55 238,272.89 241,279.49 244,286.33 247,293.41 250,300.71 253,308.22 256,315.92 259,323.8 262,331.84 265,340.03 268,348.36 271,356.8 274,365.35 277,373.98 280,382.68 283,391.44 286,400.24 289,409.06 292,417.88 295,426.7 298,435.48 301,444.22 304,452.91 307,461.51 310,470.03 313,478.43 316,486.72 319,494.86 322,502.85 325,510.67 328,518.31 331,525.75 334,532.97 337,539.98 340,546.74 343,553.25 346,559.51 349,565.48 352,571.17 355,576.57 358,581.66 361,586.43 364,590.88 367,595 370,598.77 373,602.2 376,605.27 379,607.99 382,610.34 385,612.32 388,613.93 391,615.16 394,616.02 397,616.49 400,616.59 403,616.3 406,615.64 409,614.59 412,613.17 415,611.38 418,609.21 421,606.68 424,603.78 427,600.53 430,596.93 433,592.98 436,588.7 439,584.08 442,579.15 445,573.91 448,568.36 451,562.53 454,556.41 457,550.03 460,543.39 463,536.5 466,529.39 469,522.05 472,514.51 475,506.78 478,498.87 481,490.81 484,482.59 487,474.24 490,465.78 493,457.22 496,448.57 499,439.86 502,431.09 505,422.29 508,413.47 511,404.65 514,395.84 517,387.06 520,378.32 523,369.65 526,361.06 529,352.56 532,344.18 535,335.92 538,327.8 541,319.84 544,312.04 547,304.44 550,297.03 553,289.84 556,282.88 559,276.16 562,269.68 565,263.48 568,257.55 571,251.91 574,246.56 577,241.52 580,236.8 583,232.41 586,228.35 589,224.63 592,221.26 595,218.25 598,215.59 601,213.3 604,211.39 607,209.84 610,208.67 613,207.88 616,207.46 619,207.43 622,207.78 625,208.51 628,209.62 631,211.1 634,212.96 637,215.19 640,217.78 643,220.74 646,224.05 649,227.71 652,231.71 655,236.05 658,240.72 661,245.7 664,250.99 667,256.59 670,262.47 673,268.63 676,275.06 679,281.74 682,288.67 685,295.82 688,303.19 691,310.76 694,318.52 697,326.46 700,334.55 703,342.79 706,351.16 709,359.64 712,368.22 715,376.87 718,385.6 721,394.37 724,403.18 727,412 730,420.82 733,429.63 736,438.4 739,447.13 742,455.78 745,464.36 748,472.84 751,481.21 754,489.45 757,497.54 760,505.48 763,513.24 766,520.81 769,528.18 772,535.33 775,542.26 778,548.94 781,555.37 784,561.53 787,567.41 790,573.01 793,578.3 796,583.28 799,587.95 802,592.29 805,596.29 808,599.95 811,603.26 814,606.22 817,608.81 820,611.04 823,612.9 826,614.38 829,615.49 832,616.22 835,616.57 838,616.54 841,616.12 844,615.33 847,614.16 850,612.61 853,610.7 856,608.41 859,605.75 862,602.74 865,599.37 868,595.65 871,591.59 874,587.2 877,582.48 880,577.44 883,572.09 886,566.45 889,560.52 892,554.32 895,547.84 898,541.12 901,534.16 904,526.97 907,519.56 910,511.96 913,504.16 916,496.2 919,488.08 922,479.82 925,471.44 928,462.94 931,454.35 934,445.68 937,436.94 940,428.16 943,419.35 946,410.53 949,401.71 952,392.91 955,384.14 958,375.43 961,366.78 964,358.22 967,349.76 970,341.41 973,333.19 976,325.13 979,317.22 982,309.49 985,301.95 988,294.61 991,287.5 994,280.61 997,273.97 1000,267.59 1003,261.47 1006,255.64 1009,250.09 1012,244.85 1015,239.92 1018,235.3 1021,231.02 1024,227.07 1027,223.47 1030,220.22 1033,217.32 1036,214.79 1039,212.62 1042,210.83 1045,209.41 1048,208.36 1051,207.7 1054,207.41 1057,207.51 1060,207.98 1063,208.84 1066,210.07 1069,211.68 1072,213.66 1075,216.01 1078,218.73 1081,221.8 1084,225.23 1087,229 1090,233.12 1093,237.57 1096,242.34 1099,247.43 1102,252.83 1105,258.52 1108,264.49 1111,270.75 1114,277.26 1117,284.02 1120,291.03 1123,298.25 1126,305.69 1129,313.33 1132,321.15 1135,329.14 1138,337.28 1141,345.57 1144,353.97 1147,362.49 1150,371.09 1153,379.78 1156,388.52 1159,397.3 1162,406.12 1165,414.94 1168,423.76 1171,432.56 1174,441.32 1177,450.02 1180,458.65 1183,467.2 1186,475.64 1189,483.97 1192,492.16 1195,500.2 1198,508.08 1201,515.78 1204,523.29 1207,530.59 1210,537.67 1213,544.51 1216,551.11 1219,557.45 1222,563.52 1225,569.31 1228,574.8 1231,580 1234,584.88 1237,589.43 1240,593.66 1243,597.55 1246,601.1 1249,604.29 1252,607.12 1255,609.6 1258,611.7 1261,613.43 1264,614.79 1267,615.77 1270,616.38 1273,616.6 1276,616.44 1279,615.9 1282,614.98 1285,613.69 1288,612.02 1291,609.97 1294,607.56 1297,604.79 1300,601.65 1303,598.17 1306,594.33 1309,590.16 1312,585.66 1315,580.83 1318,575.69 1321,570.25 1324,564.51 1327,558.48 1330,552.19 1333,545.63 1336,538.83 1339,531.78 1342,524.52 1345,517.05 1348,509.38 1351,501.53 1354,493.51 1357,485.34 1360,477.04 1363,468.62 1366,460.08 1369,451.46 1372,442.77 1375,434.02 1378,425.23 1381,416.41 1384,407.59 1387,398.77 1390,389.98 1393,381.23 1396,372.54 1399,363.92 1402,355.38 1405,346.96 1408,338.66 1411,330.49 1414,322.47 1417,314.62 1420,306.95 1423,299.48 1426,292.22 1429,285.17 1432,278.37 1435,271.81 1438,265.52 1441,259.49 1444,253.75 1447,248.31 1450,243.17 1453,238.34 1456,233.84 1459,229.67 1462,225.83 1465,222.35 1468,219.21 1471,216.44 1474,214.03 1477,211.98 1480,210.31 1483,209.02 1486,208.1 1489,207.56 1492,207.4 1495,207.62 1498,208.23 1501,209.21 1504,210.57 1507,212.3 1510,214.4 1513,216.88 1516,219.71 1519,222.9 1522,226.45 1525,230.34 1528,234.57 1531,239.12 1534,244 1537,249.2 1540,254.69 1543,260.48 1546,266.55 1549,272.89 1552,279.49 1555,286.33 1558,293.41 1561,300.71 1564,308.22 1567,315.92 1570,323.8 1573,331.84 1576,340.03 1579,348.36 1582,356.8 1585,365.35 1588,373.98 1591,382.68 1594,391.44 1597,400.24 1600,409.06 1603,417.88 1606,426.7 1609,435.48 1612,444.22 1615,452.91 1618,461.51 1621,470.03 1624,478.43 1627,486.72 1630,494.86 1633,502.85 1636,510.67 1639,518.31 1642,525.75 1645,532.97 1648,539.98 1651,546.74 1654,553.25 1657,559.51 1660,565.48 1663,571.17 1666,576.57 1669,581.66 1672,586.43 1675,590.88 1678,595 1681,598.77 1684,602.2 1687,605.27 1690,607.99 1693,610.34 1696,612.32 1699,613.93 1702,615.16 1705,616.02 1708,616.49 1711,616.59 1714,616.3 1717,615.64 1720,614.59 1723,613.17 1726,611.38 1729,609.21 1732,606.68 1735,603.78 1738,600.53 1741,596.93 1744,592.98 1747,588.7 1750,584.08 1753,579.15 1756,573.91 1759,568.36 1762,562.53 1765,556.41 1768,550.03 1771,543.39 1774,536.5 1777,529.39 1780,522.05 1783,514.51 1786,506.78 1789,498.87 1792,490.81 1795,482.59 1798,474.24 1801,465.78 1804,457.22 1807,448.57 1810,439.86 1813,431.09 1816,422.29 1819,413.47 1822,404.65 1825,395.84" fill="none" stroke="#a2a488" stroke-width="1.35" stroke-linejoin="round"/><polyline points="76,378.9 85.11,419 94.22,459.6 103.33,431.1 112.44,449.8 121.55,449 130.66,457.4 139.77,449 148.88,442.6 157.98,437.5 167.09,418 176.2,438.3 185.31,410.7 194.42,393.8 203.53,409.9 212.64,373.8 221.75,376.8 230.86,381 239.97,351.3 249.08,362.8 258.19,342.8 267.3,333.5 276.41,330.1 285.52,301.2 294.62,322.4 303.73,330.9 312.84,316.5 321.95,363.2 331.06,378.9 340.17,390.4 349.28,449.8 358.39,465.9 367.5,475.3 376.61,502 385.72,492.3 394.83,482.9 403.94,469 413.05,446.5 422.16,412.1 431.27,369.9 440.38,341.2 449.48,322.6 458.59,292.9 467.7,292.2 476.81,321.6 485.92,317.5 495.03,332.7 504.14,369.9 513.25,381.7 522.36,402 531.47,449.3 540.58,472.9 549.69,474.6 558.8,474.6 567.91,456.7 577.02,448.6 586.12,452 595.23,423.3 604.34,422.2 613.45,412.8 622.56,375 631.67,384.4 640.78,384.4 649.89,383.4 659,398.6 668.11,383.4 677.22,371.6 686.33,373.3 695.44,361.4 704.55,369.9 713.66,353 722.77,345.6 731.88,346.3 740.98,317.5 750.09,327 759.2,367.8 768.31,361.4 777.42,391.8 786.53,433.4 795.64,434 804.75,468.8 813.86,483.7 822.97,488.1 832.08,489.8 841.19,474.6 850.3,459.4 859.41,415.5 868.52,359.8 877.62,347.9 886.73,300.7 895.84,272 904.95,284.4 914.06,272 923.17,265.9 932.28,300.7 941.39,338.5 950.5,361.4 959.61,391.8 968.72,434 977.83,452.6 986.94,472.9 996.05,491.5 1005.16,472.9 1014.27,476.3 1023.38,464.5 1032.48,444.2 1041.59,454.3 1050.7,422.2 1059.81,419.9 1068.92,427.3 1078.03,402 1087.14,410.4 1096.25,406 1105.36,376.6 1114.47,381 1123.58,377.7 1132.69,378.3 1141.8,375 1150.91,345.6 1160.02,366.5 1169.12,375.6 1178.23,366.5 1187.34,407 1196.45,423.9 1205.56,432.4 1214.67,472.2 1223.78,472.9 1232.89,499.9 1242,550.6 1251.11,560.7 1260.22,574.2 1269.33,581.6 1278.44,564 1287.55,540.4 1296.66,501.6 1305.77,479.6 1314.88,456 1323.98,383.4 1333.09,368.9 1342.2,364.8 1351.31,332.1 1360.42,347.9 1369.53,379.3 1378.64,388.5 1387.75,412.5 1396.86,447.6 1405.97,479.6 1415.08,491.5 1424.19,510 1433.3,516.1 1442.41,510.7 1451.52,513.4 1460.62,493.2 1469.73,514.1 1478.84,505 1487.95,465.5 1497.06,491.5 1506.17,461.1 1515.28,442.5 1524.39,472.2 1533.5,456 1542.61,470.2 1551.72,460.1 1560.83,442.5 1569.94,457.7 1579.05,418.9 1588.16,413.8 1597.27,408 1606.38,366.5 1615.48,376.6 1624.59,369.9 1633.7,353 1642.81,380 1651.92,396.9 1661.03,408.7 1670.14,452.6 1679.25,476.3 1688.36,482.4 1697.47,488.1 1706.58,483 1715.69,472.9 1724.8,449.3 1733.91,428.4 1743.02,413 1752.12,368 1761.23,346.1 1770.34,344 1779.45,298.4 1788.56,295.4 1797.67,315.6 1806.78,305.4 1815.89,311.8 1825,347.5" fill="none" stroke="#93a3f5" stroke-width="1.45" stroke-linejoin="round"/><rect x="19" y="203" width="7" height="414" fill="#8a9090"/><rect x="19" y="203" width="2" height="414" fill="#9aa0b0"/><rect x="19" y="400" width="6.5" height="23" fill="#2fda22"/><rect x="19" y="400" width="1.5" height="23" fill="#7cf07c"/><rect x="76" y="646" width="1748" height="7" fill="#888d8d"/><rect x="76" y="646" width="1748" height="1.5" fill="#9aa0b8"/><rect x="76" y="646" width="19" height="7" fill="#2fd82f"/><rect x="77" y="647" width="16" height="2" fill="#7cf07c"/><text x="58" y="193" font-size="11" fill="#a8b09a" textLength="7" lengthAdjust="spacingAndGlyphs">V</text><text x="1880" y="193" font-size="11" fill="#9cb8f0" textLength="9" lengthAdjust="spacingAndGlyphs">%</text><text x="42.5" y="215" font-size="11" fill="#a8b09a" textLength="23" lengthAdjust="spacingAndGlyphs">3.99</text><text x="42.5" y="315" font-size="11" fill="#a8b09a" textLength="23" lengthAdjust="spacingAndGlyphs">1.99</text><text x="42.5" y="415" font-size="11" fill="#a8b09a" textLength="23" lengthAdjust="spacingAndGlyphs">0.00</text><text x="38.5" y="515" font-size="11" fill="#a8b09a" textLength="27" lengthAdjust="spacingAndGlyphs">-1.99</text><text x="38.5" y="616" font-size="11" fill="#a8b09a" textLength="27" lengthAdjust="spacingAndGlyphs">-3.99</text><text x="1845.5" y="215" font-size="11" fill="#9cb8f0" textLength="44" lengthAdjust="spacingAndGlyphs">0.09808</text><text x="1845.5" y="315" font-size="11" fill="#9cb8f0" textLength="44" lengthAdjust="spacingAndGlyphs">0.04904</text><text x="1845.5" y="415" font-size="11" fill="#9cb8f0" textLength="44" lengthAdjust="spacingAndGlyphs">0.00000</text><text x="1841.5" y="515" font-size="11" fill="#9cb8f0" textLength="48" lengthAdjust="spacingAndGlyphs">-0.04904</text><text x="1841.5" y="616" font-size="11" fill="#9cb8f0" textLength="48" lengthAdjust="spacingAndGlyphs">-0.09808</text><text x="76" y="638" font-size="11" fill="#aab0a0" textLength="43" lengthAdjust="spacingAndGlyphs">0.00 ms</text><text x="283.12" y="638" font-size="11" fill="#aab0a0" textLength="23" lengthAdjust="spacingAndGlyphs">0.50</text><text x="501.75" y="638" font-size="11" fill="#aab0a0" textLength="23" lengthAdjust="spacingAndGlyphs">1.00</text><text x="720.38" y="638" font-size="11" fill="#aab0a0" textLength="23" lengthAdjust="spacingAndGlyphs">1.50</text><text x="939" y="638" font-size="11" fill="#aab0a0" textLength="23" lengthAdjust="spacingAndGlyphs">2.00</text><text x="1157.62" y="638" font-size="11" fill="#aab0a0" textLength="23" lengthAdjust="spacingAndGlyphs">2.50</text><text x="1376.25" y="638" font-size="11" fill="#aab0a0" textLength="23" lengthAdjust="spacingAndGlyphs">3.00</text><text x="1594.88" y="638" font-size="11" fill="#aab0a0" textLength="23" lengthAdjust="spacingAndGlyphs">3.50</text><text x="1801" y="638" font-size="11" fill="#aab0a0" textLength="23" lengthAdjust="spacingAndGlyphs">4.00</text></svg><div class="a" style="left:13px;top:658px;width:1883px;height:6px;background:#f1f0f8"></div><div class="a" style="left:13px;top:663px;width:1883px;height:1px;background:#8e8e80"></div><div class="a" style="left:13px;top:664px;width:1883px;height:31px;background:#fffffc"></div><div class="a" style="left:13px;top:694px;width:1883px;height:1px;background:#eef0f4"></div><div class="a" style="left:13px;top:665px;width:524px;height:29px;background:#f6f6f2"></div><div class="a" style="left:537px;top:665px;width:1px;height:29px;background:#8a8a8a"></div><svg style="left:15px;top:671.3px" width="16" height="19" font-family="Liberation Sans, sans-serif"><text x="2" y="13.2" font-size="11" fill="#444" textLength="8" lengthAdjust="spacingAndGlyphs">X</text></svg><div class="a" style="left:32px;top:671px;width:68px;height:20px;background:#000"></div><div class="a" style="left:104px;top:670px;width:73px;height:21px;background:#f0f0f0;border:1px solid;border-color:#8a8a8a #fff #fff #8a8a8a"></div><svg style="left:106px;top:671.6px" width="23" height="21" font-family="Liberation Sans, sans-serif"><text x="2" y="14.4" font-size="12" fill="#a8a8a8" textLength="15" lengthAdjust="spacingAndGlyphs">ms</text></svg><svg style="left:160px;top:672px" width="16" height="18" viewBox="0 0 16 18"><rect x="0" y="0" width="15" height="17" fill="#ececec"/><path d="M0 16.5 H15.5 V0" stroke="#777" fill="none"/><path d="M4 7 H11 L7.5 11Z" fill="#8a8a8a"/></svg><svg style="left:180px;top:671.3px" width="16" height="19" font-family="Liberation Sans, sans-serif"><text x="2" y="13.2" font-size="11" fill="#444" textLength="8" lengthAdjust="spacingAndGlyphs">Y</text></svg><div class="a" style="left:196px;top:671px;width:68px;height:20px;background:#000"></div><div class="a" style="left:268px;top:670px;width:74px;height:21px;background:#f0f0f0;border:1px solid;border-color:#8a8a8a #fff #fff #8a8a8a"></div><svg style="left:270px;top:671.6px" width="15" height="21" font-family="Liberation Sans, sans-serif"><text x="2" y="14.4" font-size="12" fill="#a8a8a8" textLength="7" lengthAdjust="spacingAndGlyphs">V</text></svg><svg style="left:325px;top:672px" width="16" height="18" viewBox="0 0 16 18"><rect x="0" y="0" width="15" height="17" fill="#ececec"/><path d="M0 16.5 H15.5 V0" stroke="#777" fill="none"/><path d="M4 7 H11 L7.5 11Z" fill="#8a8a8a"/></svg><div class="a" style="left:346px;top:671px;width:1px;height:19px;background:#cfcfcf"></div><svg style="left:351px;top:674px" width="13" height="13" viewBox="0 0 13 13"><rect x="0" y="0" width="12" height="12" fill="#f4f4f4"/><path d="M0.5 11.5 V0.5 H11.5" stroke="#777" fill="none"/><path d="M1.5 10.5 V1.5 H10.5" stroke="#444" fill="none"/></svg><svg style="left:367px;top:671.8px" width="49" height="19" font-family="Liberation Sans, sans-serif"><text x="2" y="13.2" font-size="11" fill="#b4b4b4" textLength="41" lengthAdjust="spacingAndGlyphs">Relative</text></svg><div class="a" style="left:430px;top:671px;width:1px;height:19px;background:#cfcfcf"></div><svg style="left:0;top:0" width="560" height="700" viewBox="0 0 560 700"><g transform="translate(438,672)"><path d="M9 2 V12 M4 7 H14" stroke="#b6b6b6" stroke-width="1.8"/><path d="M1 12 L4 9 M1 12 L4 14" stroke="#b6b6b6" stroke-width="1.2"/></g><g transform="translate(460,672)"><path d="M6 2 V12 M1 7 H11" stroke="#b6b6b6" stroke-width="1.8"/><path d="M15 12 L12 9 M15 12 L12 14" stroke="#b6b6b6" stroke-width="1.2"/></g><path d="M480.5 672 V690" stroke="#cfcfcf" stroke-width="1"/><g transform="translate(484,672)"><path d="M8 1 V9 M4 5 H12" stroke="#b6b6b6" stroke-width="1.8"/><path d="M1 3 V14 H15" stroke="#b6b6b6" stroke-width="1" stroke-dasharray="2 1" fill="none"/></g><path d="M506.5 672 V690" stroke="#cfcfcf" stroke-width="1"/><g transform="translate(510,672)"><path d="M2 8 H14 M10 5 L14 8 L10 11" stroke="#b6b6b6" stroke-width="1.6" fill="none"/><path d="M11 1 V5 M9 3 H13 M3 10 V14 M1 12 H5" stroke="#b6b6b6" stroke-width="1.4"/></g></svg>
<div class="a" style="left:11px;top:717px;width:356.5px;height:186px;background:#c5adad;border:1px solid #d9c6c6;border-radius:4px 4px 1px 1px;box-shadow:0 0 0 1px rgba(150,135,135,.55)"></div><div class="a" style="left:12px;top:718px;width:354.5px;height:27px;border-radius:3px 3px 0 0;background:linear-gradient(180deg,#c2acac,#c8b0ae 60%,#c6adab)"></div><svg style="left:20px;top:727px" width="18" height="16" viewBox="0 0 18 16"><path d="M7.5 2 L14 13 H1 Z" fill="#fff" stroke="#2a2020" stroke-width="1.3" stroke-linejoin="round"/><path d="M12 11 L16 14" stroke="#4a3a3a" stroke-width="1"/></svg><svg style="left:36px;top:724.6px" width="76" height="21" font-family="Liberation Sans, sans-serif"><text x="2" y="14.4" font-size="12" fill="#fbf6f6" textLength="68" lengthAdjust="spacingAndGlyphs" font-weight="bold" stroke="#d8c8c8" stroke-width=".4" paint-order="stroke">FFT Reading</text></svg><div class="a" style="left:259px;top:726px;width:31px;height:17px;border:1px solid #a9b3c8;border-radius:3px;background:linear-gradient(180deg,#dbe3ee,#c9d4e4 50%,#d6deea);box-shadow:inset 0 0 0 1px rgba(255,255,255,.5)"></div><div class="a" style="left:293px;top:726px;width:31px;height:17px;border:1px solid #a9b3c8;border-radius:3px;background:linear-gradient(180deg,#dbe3ee,#c9d4e4 50%,#d6deea);box-shadow:inset 0 0 0 1px rgba(255,255,255,.5)"></div><div class="a" style="left:327px;top:726px;width:31px;height:17px;border:1px solid #a9b3c8;border-radius:3px;background:linear-gradient(180deg,#dbe3ee,#c9d4e4 50%,#d6deea);box-shadow:inset 0 0 0 1px rgba(255,255,255,.5)"></div><svg style="left:259px;top:726px" width="100" height="17" viewBox="0 0 100 17"><rect x="9.5" y="7.5" width="11" height="3" rx="1" fill="#f4f6fa" stroke="#69758c" stroke-width="1"/><rect x="44.5" y="4.5" width="9" height="7" fill="#f4f6fa" stroke="#69758c" stroke-width="1.2"/><rect x="47" y="7" width="4" height="2" fill="#69758c"/><path d="M79 4.5 L87 11.5 M87 4.5 L79 11.5" stroke="#69758c" stroke-width="3.2" fill="none"/><path d="M79 4.5 L87 11.5 M87 4.5 L79 11.5" stroke="#f4f6fa" stroke-width="1.3" fill="none"/></svg><div class="a" style="left:16px;top:745px;width:1px;height:150px;background:#a89a9a"></div><div class="a" style="left:16px;top:744.5px;width:345px;height:1.5px;background:#a09090"></div><div class="a" style="left:17px;top:746px;width:343.5px;height:149px;background:#f0f0f0"></div><div class="a" style="left:17px;top:746px;width:343.5px;height:19px;background:#f4f4f4"></div><div class="a" style="left:17px;top:893px;width:343.5px;height:2px;background:#fafafa"></div><svg style="left:18px;top:746.8px" width="113" height="19" font-family="Liberation Sans, sans-serif"><text x="2" y="13.2" font-size="11" fill="#111" textLength="105" lengthAdjust="spacingAndGlyphs">Amplitude (Channel A)</text></svg><div class="a" style="left:19px;top:765.5px;width:313.8px;height:127px;background:#000"></div><svg style="left:20.5px;top:761.66px" width="311.5" height="127" font-family="Liberation Sans, sans-serif"><text x="2" y="93.84" font-size="78.2" fill="#1fe3e3" textLength="303.5" lengthAdjust="spacingAndGlyphs" stroke="#1fe3e3" stroke-width="1.2">2.8918 V</text></svg><svg style="left:337px;top:768px" width="22" height="84" viewBox="0 0 22 84"><g transform="translate(0,0)"><rect x="0.5" y="0.5" width="20" height="17" fill="#e4e4e4" stroke="#c4c4c4"/><path d="M0.5 17.5 V0.5 H20.5" stroke="#fff" fill="none"/><path d="M20.5 0.5 V17.5 H0.5" stroke="#8a8a8a" fill="none"/><rect x="3" y="2.5" width="15" height="9" fill="#0e3a34"/><path d="M5 5 V9 M7.5 5 H9.5 V9 H7.5Z M12 5 H14 V9 H12Z" stroke="#9fe0c8" stroke-width=".9" fill="none"/><path d="M3 14 H18" stroke="#222" stroke-width="1.6"/></g><g transform="translate(0,21)"><rect x="0.5" y="0.5" width="20" height="17" fill="#e4e4e4" stroke="#c4c4c4"/><path d="M0.5 17.5 V0.5 H20.5" stroke="#fff" fill="none"/><path d="M20.5 0.5 V17.5 H0.5" stroke="#8a8a8a" fill="none"/><circle cx="8.5" cy="7" r="4.6" fill="#f6f6f6" stroke="#111" stroke-width="1.4"/><circle cx="8.5" cy="7" r="1.7" fill="#111"/><path d="M12 10.5 L16 5.5 M15.5 5 L17.5 6.5" stroke="#111" stroke-width="1.6"/><path d="M6 12 C8 16 12 16 14 12.5" stroke="#111" stroke-width="1.6" fill="none"/></g><g transform="translate(0,42)"><rect x="0.5" y="0.5" width="20" height="17" fill="#e4e4e4" stroke="#c4c4c4"/><path d="M0.5 17.5 V0.5 H20.5" stroke="#fff" fill="none"/><path d="M20.5 0.5 V17.5 H0.5" stroke="#8a8a8a" fill="none"/><rect x="3.5" y="5.5" width="11" height="9" fill="#ddd" stroke="#111" stroke-width="1.2"/><path d="M3.5 8.5 H14.5 M3.5 11.5 H14.5 M7 5.5 V14.5 M11 5.5 V14.5" stroke="#111" stroke-width="1"/><path d="M12 7.5 L17.5 2" stroke="#111" stroke-width="2.2"/></g><g transform="translate(0,63)"><rect x="0.5" y="0.5" width="20" height="17" fill="#e4e4e4" stroke="#c4c4c4"/><path d="M0.5 17.5 V0.5 H20.5" stroke="#fff" fill="none"/><path d="M20.5 0.5 V17.5 H0.5" stroke="#8a8a8a" fill="none"/><path d="M4 9 H9 M6.5 6.5 V11.5 M12 9 H17 M14.5 6.5 V11.5" stroke="#bdbdbd" stroke-width="1.4"/></g></svg>
<div class="a" style="left:383px;top:714px;width:346px;height:195px;background:#0ba90b;border:1px solid #63cf63;border-radius:5px 5px 2px 2px;box-shadow:0 0 0 1px rgba(150,170,150,.35)"></div><div class="a" style="left:386px;top:906px;width:340px;height:2px;background:#089008"></div><svg style="left:393px;top:729px" width="16" height="14" viewBox="0 0 16 14"><path d="M7.5 2.5 L13.5 11 H1.5 Z" fill="#fff"/></svg><svg style="left:410px;top:725.6px" width="72" height="21" font-family="Liberation Sans, sans-serif"><text x="2" y="14.4" font-size="12" fill="#f4fff4" textLength="64" lengthAdjust="spacingAndGlyphs" font-weight="bold" stroke="#6fd06f" stroke-width=".5" paint-order="stroke">CT Reading</text></svg><div class="a" style="left:619px;top:727px;width:31px;height:17px;border:1px solid #7fa6b8;border-radius:3px;background:linear-gradient(180deg,#cfe0ee,#a9c4dc 48%,#9dbad4 52%,#bcd4e6);box-shadow:inset 0 0 0 1px rgba(255,255,255,.45)"></div><div class="a" style="left:653px;top:727px;width:31px;height:17px;border:1px solid #7fa6b8;border-radius:3px;background:linear-gradient(180deg,#cfe0ee,#a9c4dc 48%,#9dbad4 52%,#bcd4e6);box-shadow:inset 0 0 0 1px rgba(255,255,255,.45)"></div><div class="a" style="left:687px;top:727px;width:31px;height:17px;border:1px solid #8a4a3a;border-radius:3px;background:linear-gradient(180deg,#e8a48e,#d9604c 48%,#cf4436 52%,#e89a7c);box-shadow:inset 0 0 0 1px rgba(255,255,255,.35)"></div><svg style="left:619px;top:727px" width="100" height="17" viewBox="0 0 100 17"><rect x="8.5" y="6.5" width="14" height="3.5" rx="1.5" fill="#fff" stroke="#4a5a70" stroke-width="1"/><rect x="43.5" y="4.5" width="10" height="8" fill="#fff" stroke="#4a5a70" stroke-width="1.2"/><rect x="46" y="7" width="5" height="3" fill="#4a5a70"/><path d="M79.5 4.5 L87.5 12 M87.5 4.5 L79.5 12" stroke="#6a2a2a" stroke-width="3.6" fill="none"/><path d="M79.5 4.5 L87.5 12 M87.5 4.5 L79.5 12" stroke="#fff" stroke-width="1.8" fill="none"/></svg><div class="a" style="left:391px;top:746px;width:330px;height:2px;background:#7fdc7f"></div><div class="a" style="left:391px;top:748px;width:330px;height:152px;background:#f0f0f0"></div><div class="a" style="left:391px;top:748px;width:330px;height:18px;background:#f3f3f3"></div><div class="a" style="left:391px;top:898px;width:330px;height:2px;background:#b8f0b8"></div><svg style="left:392px;top:747.8px" width="173" height="19" font-family="Liberation Sans, sans-serif"><text x="2" y="13.2" font-size="11" fill="#111" textLength="165" lengthAdjust="spacingAndGlyphs">THD+N - relative (Channel A RMS)</text></svg><div class="a" style="left:393px;top:766.5px;width:298.5px;height:131.5px;background:#000"></div><svg style="left:397.5px;top:781.74px" width="290.5" height="97" font-family="Liberation Sans, sans-serif"><text x="2" y="71.76" font-size="59.8" fill="#1fe3e3" textLength="282.5" lengthAdjust="spacingAndGlyphs" stroke="#1fe3e3" stroke-width=".9">0.10918 %</text></svg><svg style="left:698px;top:769px" width="22" height="84" viewBox="0 0 22 84"><g transform="translate(0,0)"><rect x="0.5" y="0.5" width="20" height="17" fill="#e4e4e4" stroke="#c4c4c4"/><path d="M0.5 17.5 V0.5 H20.5" stroke="#fff" fill="none"/><path d="M20.5 0.5 V17.5 H0.5" stroke="#8a8a8a" fill="none"/><rect x="3" y="2.5" width="15" height="9" fill="#0e3a34"/><path d="M5 5 V9 M7.5 5 H9.5 V9 H7.5Z M12 5 H14 V9 H12Z" stroke="#9fe0c8" stroke-width=".9" fill="none"/><path d="M3 14 H18" stroke="#222" stroke-width="1.6"/></g><g transform="translate(0,21)"><rect x="0.5" y="0.5" width="20" height="17" fill="#e4e4e4" stroke="#c4c4c4"/><path d="M0.5 17.5 V0.5 H20.5" stroke="#fff" fill="none"/><path d="M20.5 0.5 V17.5 H0.5" stroke="#8a8a8a" fill="none"/><circle cx="8.5" cy="7" r="4.6" fill="#f6f6f6" stroke="#111" stroke-width="1.4"/><circle cx="8.5" cy="7" r="1.7" fill="#111"/><path d="M12 10.5 L16 5.5 M15.5 5 L17.5 6.5" stroke="#111" stroke-width="1.6"/><path d="M6 12 C8 16 12 16 14 12.5" stroke="#111" stroke-width="1.6" fill="none"/></g><g transform="translate(0,42)"><rect x="0.5" y="0.5" width="20" height="17" fill="#e4e4e4" stroke="#c4c4c4"/><path d="M0.5 17.5 V0.5 H20.5" stroke="#fff" fill="none"/><path d="M20.5 0.5 V17.5 H0.5" stroke="#8a8a8a" fill="none"/><rect x="3.5" y="5.5" width="11" height="9" fill="#ddd" stroke="#111" stroke-width="1.2"/><path d="M3.5 8.5 H14.5 M3.5 11.5 H14.5 M7 5.5 V14.5 M11 5.5 V14.5" stroke="#111" stroke-width="1"/><path d="M12 7.5 L17.5 2" stroke="#111" stroke-width="2.2"/></g><g transform="translate(0,63)"><rect x="0.5" y="0.5" width="20" height="17" fill="#e4e4e4" stroke="#c4c4c4"/><path d="M0.5 17.5 V0.5 H20.5" stroke="#fff" fill="none"/><path d="M20.5 0.5 V17.5 H0.5" stroke="#8a8a8a" fill="none"/><path d="M4 9 H9 M6.5 6.5 V11.5 M12 9 H17 M14.5 6.5 V11.5" stroke="#bdbdbd" stroke-width="1.4"/></g></svg>
<div class="a" style="left:0px;top:1007px;width:1910px;height:21px;background:#f0f0f0"></div><div class="a" style="left:0px;top:1007px;width:1910px;height:3px;background:#fbfbfb"></div><div class="a" style="left:0px;top:1026px;width:1910px;height:2px;background:#f6e8f4"></div><svg style="left:0px;top:1009.6px" width="99" height="21" font-family="Liberation Sans, sans-serif"><text x="2" y="14.4" font-size="12" fill="#1a1a1a" textLength="91" lengthAdjust="spacingAndGlyphs">For Help, press F1</text></svg><svg style="left:0;top:0" width="1400" height="1036" viewBox="0 0 1400 1036"><g transform="translate(1311,1011)"><path d="M2 7 A5 5 0 0 1 12 7 V8 H2 Z" fill="#e8e8e8" stroke="#111" stroke-width="1.2"/><path d="M4.5 6 H9.5" stroke="#111"/><rect x="1" y="8.5" width="12" height="3" fill="#111"/><path d="M3 13.5 H10 M8.5 12 L10.5 13.5 L8.5 15" stroke="#111" stroke-width="1" fill="none"/></g><g transform="translate(1330,1011)"><rect x="1" y="1" width="13" height="9" fill="#111"/><path d="M2.5 3.5 H12.5 M2.5 6 H12.5 M2.5 8 H12.5" stroke="#e8e8e8" stroke-width="1"/><path d="M3 12.5 H12 M10 11 L12.5 12.5 L10 14" stroke="#111" stroke-width="1.2" fill="none"/><path d="M4 14.5 H9" stroke="#111"/></g></svg><div class="a" style="left:1349px;top:1010px;width:40px;height:17px;background:#f4f4f4;border:1px solid #e2e2e2"></div><svg style="left:1354px;top:1010.2px" width="33" height="16" font-family="Liberation Sans, sans-serif"><text x="2" y="10.8" font-size="9" fill="#b8b8b8" textLength="25" lengthAdjust="spacingAndGlyphs">Sigard</text></svg><svg style="left:1349px;top:1010px" width="40" height="17" viewBox="0 0 40 17"><path d="M12 12.5 H26 M21 10.5 V15" stroke="#c0c0c0" stroke-width="1" fill="none"/></svg><svg style="left:1392px;top:1010px" width="14" height="17" viewBox="0 0 14 17"><path d="M1 9 H7 V5.5 L12.5 9.5 L7 13.5 V10.5 H1Z" fill="#111"/></svg><div class="a" style="left:1407px;top:1010px;width:56px;height:17px;background:#f4f4f4;border:1px solid #e0e0e0"></div><svg style="left:1408px;top:1008.4px" width="59" height="22" font-family="Liberation Sans, sans-serif"><text x="2" y="15.6" font-size="13" fill="#222" textLength="51" lengthAdjust="spacingAndGlyphs">Bal/unbal</text></svg><div class="a" style="left:1464px;top:1011px;width:49px;height:16px;background:#f40808"></div><svg style="left:1474px;top:1012.2px" width="30" height="16" font-family="Liberation Sans, sans-serif"><text x="2" y="10.8" font-size="9" fill="#b00000" textLength="22" lengthAdjust="spacingAndGlyphs" font-weight="bold">BNC</text></svg><div class="a" style="left:1517px;top:1011px;width:32px;height:16px;background:#f40808"></div><svg style="left:1523px;top:1012.2px" width="23" height="16" font-family="Liberation Sans, sans-serif"><text x="2" y="10.8" font-size="9" fill="#b80000" textLength="15" lengthAdjust="spacingAndGlyphs" font-weight="bold">Dig</text></svg><div class="a" style="left:1553px;top:1011px;width:15px;height:16px;background:#e81010"></div><div class="a" style="left:1572px;top:1011px;width:23px;height:16px;background:#f40808"></div><div class="a" style="left:1595px;top:1011px;width:31px;height:8px;background:#f40808"></div><div class="a" style="left:1595px;top:1012px;width:8px;height:15px;background:#f0f0f0"></div><svg style="left:1594px;top:1009.6px" width="14" height="21" font-family="Liberation Sans, sans-serif"><text x="2" y="14.4" font-size="12" fill="#333" textLength="6" lengthAdjust="spacingAndGlyphs">5</text></svg><div class="a" style="left:1630px;top:1010px;width:54px;height:17px;background:#f2f2f2;border:1px solid #e0e0e0"></div><div class="a" style="left:1630px;top:1010px;width:54px;height:2px;background:#e2e2e2"></div><div class="a" style="left:1689px;top:1012px;width:43px;height:14px;background:#fbfbfb;border:2px solid #151515;border-radius:3.5px"></div><svg style="left:1690px;top:1009.1px" width="46" height="21" font-family="Liberation Sans, sans-serif"><text x="2" y="14.4" font-size="12" fill="#111" textLength="38" lengthAdjust="spacingAndGlyphs" font-weight="bold">Page 1</text></svg><div class="a" style="left:1733px;top:1012px;width:42px;height:14px;background:#fbfbfb;border:2px solid #151515;border-radius:3.5px"></div><svg style="left:1733.5px;top:1009.1px" width="46" height="21" font-family="Liberation Sans, sans-serif"><text x="2" y="14.4" font-size="12" fill="#111" textLength="38" lengthAdjust="spacingAndGlyphs" font-weight="bold">Page 2</text></svg><div class="a" style="left:1776px;top:1012px;width:42px;height:14px;background:#fbfbfb;border:2px solid #151515;border-radius:3.5px"></div><svg style="left:1776.5px;top:1009.1px" width="46" height="21" font-family="Liberation Sans, sans-serif"><text x="2" y="14.4" font-size="12" fill="#111" textLength="38" lengthAdjust="spacingAndGlyphs" font-weight="bold">Page 3</text></svg><div class="a" style="left:1819px;top:1012px;width:43px;height:14px;background:#fbfbfb;border:2px solid #151515;border-radius:3.5px"></div><svg style="left:1820px;top:1009.1px" width="46" height="21" font-family="Liberation Sans, sans-serif"><text x="2" y="14.4" font-size="12" fill="#111" textLength="38" lengthAdjust="spacingAndGlyphs" font-weight="bold">Page 4</text></svg><div class="a" style="left:1864px;top:1012px;width:42px;height:14px;background:#fbfbfb;border:2px solid #151515;border-radius:3.5px"></div><svg style="left:1866px;top:1009.1px" width="43" height="21" font-family="Liberation Sans, sans-serif"><text x="2" y="14.4" font-size="12" fill="#111" textLength="35" lengthAdjust="spacingAndGlyphs" font-weight="normal">Page 5</text></svg>
<div class="a" style="left:744px;top:915px;width:237px;height:97px;background:#f1f1f8;border:1px solid #4a2a5a;border-radius:4px;box-shadow:0 0 0 1px rgba(150,120,160,.35)"></div><div class="a" style="left:744px;top:915px;width:237px;height:31px;background:#6b0082;border-radius:4px 4px 0 0"></div><svg style="left:751px;top:921.1px" width="46.5" height="21" font-family="Liberation Sans, sans-serif"><text x="2" y="14.4" font-size="12" fill="#f2e4f4" textLength="38.5" lengthAdjust="spacingAndGlyphs">Legend</text></svg><div class="a" style="left:960px;top:923px;width:19px;height:19px;background:#d0533a"></div><svg style="left:960px;top:923px" width="19" height="19" viewBox="0 0 19 19"><path d="M7 7 L12 12 M12 7 L7 12" stroke="#fff" stroke-width="1.3" fill="none"/></svg><div class="a" style="left:745px;top:946px;width:235px;height:2px;background:#e8e4f0"></div><div class="a" style="left:779px;top:948.5px;width:187px;height:15px;background:#0a79d8"></div><svg style="left:747px;top:951px" width="11" height="11" viewBox="0 0 11 11"><rect x="0" y="0" width="11" height="11" fill="#fff"/><path d="M0.5 10.5 V0.5 H10.5" stroke="#666" fill="none"/><path d="M1.5 9.5 V1.5 H9.5" stroke="#222" fill="none"/><path d="M2.5 5 L4.5 7.5 L8.5 2.8" stroke="#111" stroke-width="1.8" fill="none"/></svg><svg style="left:763px;top:949px" width="16" height="14" viewBox="0 0 16 14"><rect x="0" y="0" width="16" height="14" fill="#06120e"/><rect x="0" y="0" width="16" height="14" fill="#0a2a22"/><path d="M1 9 C3 0 6 0 8 7 S13 14 15 5" stroke="#5fd07f" stroke-width="1.3" fill="none"/><path d="M0 12.5 H16" stroke="#1d6a5a" stroke-width="1"/></svg><svg style="left:783px;top:945.6px" width="15.5" height="21" font-family="Liberation Sans, sans-serif"><text x="2" y="14.4" font-size="12" fill="#e6f2ff" textLength="7.5" lengthAdjust="spacingAndGlyphs">A</text></svg><svg style="left:795.5px;top:945.6px" width="94.5" height="21" font-family="Liberation Sans, sans-serif"><text x="2" y="14.4" font-size="12" fill="#e6f2ff" textLength="86.5" lengthAdjust="spacingAndGlyphs">Live Scope Trace</text></svg><svg style="left:967px;top:950px" width="14" height="13" viewBox="0 0 14 13"><path d="M0.5 0.5 H7.5 V10.5 H0.5 Z M0.5 3.5 H7.5 M0.5 6.5 H7.5 M4 0.5 V10.5" stroke="#222" stroke-width="1" fill="none"/><path d="M6.5 4.5 H12.5 V11.5 H6.5 Z M6.5 7.5 H12.5 M9.5 4.5 V11.5" stroke="#222" stroke-width="1" fill="#fff"/></svg><svg style="left:747px;top:967px" width="11" height="11" viewBox="0 0 11 11"><rect x="0" y="0" width="11" height="11" fill="#fff"/><path d="M0.5 10.5 V0.5 H10.5" stroke="#666" fill="none"/><path d="M1.5 9.5 V1.5 H9.5" stroke="#222" fill="none"/></svg><svg style="left:763px;top:965px" width="16" height="14" viewBox="0 0 16 14"><rect x="0" y="0" width="16" height="14" fill="#06120e"/><path d="M1 12.5 H15" stroke="#3fae3f" stroke-width="1.2"/><path d="M5 12 V3 M8 12 V7 M11 12 V9" stroke="#3fae3f" stroke-width="1.2"/></svg><svg style="left:783px;top:961.6px" width="15.5" height="21" font-family="Liberation Sans, sans-serif"><text x="2" y="14.4" font-size="12" fill="#1a1a1a" textLength="7.5" lengthAdjust="spacingAndGlyphs">A</text></svg><svg style="left:795.5px;top:961.6px" width="81" height="21" font-family="Liberation Sans, sans-serif"><text x="2" y="14.4" font-size="12" fill="#1a1a1a" textLength="73" lengthAdjust="spacingAndGlyphs">Live FFT Trace</text></svg><svg style="left:967px;top:966px" width="14" height="13" viewBox="0 0 14 13"><path d="M0.5 0.5 H7.5 V10.5 H0.5 Z M0.5 3.5 H7.5 M0.5 6.5 H7.5 M4 0.5 V10.5" stroke="#b8b8c4" stroke-width="1" fill="none"/><path d="M6.5 4.5 H12.5 V11.5 H6.5 Z M6.5 7.5 H12.5 M9.5 4.5 V11.5" stroke="#b8b8c4" stroke-width="1" fill="none"/></svg><svg style="left:747px;top:983px" width="11" height="11" viewBox="0 0 11 11"><rect x="0" y="0" width="11" height="11" fill="#fff"/><path d="M0.5 10.5 V0.5 H10.5" stroke="#666" fill="none"/><path d="M1.5 9.5 V1.5 H9.5" stroke="#222" fill="none"/><path d="M2.5 5 L4.5 7.5 L8.5 2.8" stroke="#111" stroke-width="1.8" fill="none"/></svg><svg style="left:763px;top:981px" width="16" height="14" viewBox="0 0 16 14"><rect x="0" y="0" width="16" height="14" fill="#06120e"/><path d="M1 7.5 H15" stroke="#35c8c8" stroke-width="3.6" stroke-dasharray="1.2 .8"/><path d="M1 7.5 H15" stroke="#8ff" stroke-width="1"/></svg><svg style="left:783px;top:977.6px" width="15.5" height="21" font-family="Liberation Sans, sans-serif"><text x="2" y="14.4" font-size="12" fill="#1a1a1a" textLength="7.5" lengthAdjust="spacingAndGlyphs">A</text></svg><svg style="left:795.5px;top:977.6px" width="168" height="21" font-family="Liberation Sans, sans-serif"><text x="2" y="14.4" font-size="12" fill="#1a1a1a" textLength="160" lengthAdjust="spacingAndGlyphs">Live CTA output (transformed)</text></svg><svg style="left:967px;top:982px" width="14" height="13" viewBox="0 0 14 13"><path d="M0.5 0.5 H7.5 V10.5 H0.5 Z M0.5 3.5 H7.5 M0.5 6.5 H7.5 M4 0.5 V10.5" stroke="#222" stroke-width="1" fill="none"/><path d="M6.5 4.5 H12.5 V11.5 H6.5 Z M6.5 7.5 H12.5 M9.5 4.5 V11.5" stroke="#222" stroke-width="1" fill="#fff"/></svg><svg style="left:747px;top:999px" width="11" height="11" viewBox="0 0 11 11"><rect x="0" y="0" width="11" height="11" fill="#fff"/><path d="M0.5 10.5 V0.5 H10.5" stroke="#666" fill="none"/><path d="M1.5 9.5 V1.5 H9.5" stroke="#222" fill="none"/></svg><svg style="left:763px;top:997px" width="16" height="14" viewBox="0 0 16 14"><rect x="0" y="0" width="16" height="14" fill="#06120e"/><path d="M1 12.5 H15" stroke="#d8d8d8" stroke-width="1.2"/><path d="M6 12 V2 M9 12 V7 M11.5 12 V9" stroke="#e8e8e8" stroke-width="1.2"/></svg><svg style="left:783px;top:993.6px" width="15.5" height="21" font-family="Liberation Sans, sans-serif"><text x="2" y="14.4" font-size="12" fill="#1a1a1a" textLength="7.5" lengthAdjust="spacingAndGlyphs">A</text></svg><svg style="left:795.5px;top:993.6px" width="127.5" height="21" font-family="Liberation Sans, sans-serif"><text x="2" y="14.4" font-size="12" fill="#1a1a1a" textLength="119.5" lengthAdjust="spacingAndGlyphs">Live FFT of CTA output</text></svg><svg style="left:967px;top:998px" width="14" height="13" viewBox="0 0 14 13"><path d="M0.5 0.5 H7.5 V10.5 H0.5 Z M0.5 3.5 H7.5 M0.5 6.5 H7.5 M4 0.5 V10.5" stroke="#b8b8c4" stroke-width="1" fill="none"/><path d="M6.5 4.5 H12.5 V11.5 H6.5 Z M6.5 7.5 H12.5 M9.5 4.5 V11.5" stroke="#b8b8c4" stroke-width="1" fill="none"/></svg>
<svg style="left:0;top:0" width="1912" height="1036" viewBox="0 0 1912 1036" font-family="Liberation Sans, sans-serif"><rect x="1757.2" y="966.4" width="9.6" height="41" fill="#585d86"/><rect x="1757.2" y="1007" width="9.6" height="6" fill="#666c9c"/><rect x="1757.2" y="1013" width="9.6" height="13" fill="#585d86" opacity=".45"/><rect x="1737.8" y="974.2" width="19.6" height="3.3" fill="#585d86"/><rect x="1739" y="991" width="18.4" height="3" fill="#585d86"/><rect x="1737.5" y="1008" width="19.8" height="2.6" fill="#7a80b2"/><path d="M1772 967 H1776.3 V972.4 H1794 L1797.5 968.4 H1806.5 L1808 970 V984 H1799.5 V976 H1772 Z" fill="#4a89c9"/><path d="M1772 980 H1796.6 V996.2 H1776.3 V1007 H1772 V992.7 H1787 V983.7 H1772 Z" fill="#4a89c9"/><path d="M1776.3 999.4 H1803.8 V1007 H1795.4 V1002.8 H1776.3 Z" fill="#4a89c9"/><path d="M1772 1007 H1776.3 V1013 H1772Z M1795.4 1007 H1803.8 V1013 H1795.4Z" fill="#7fb3e6"/><path d="M1772 1013 H1776.3 V1026 H1772Z M1795.4 1013 H1803.8 V1026 H1795.4Z" fill="#7fb3e6" opacity=".4"/><path d="M1788 983 L1795 994 M1801 970 L1806 973" stroke="#8fbbe6" stroke-width=".8"/><text x="1813.3" y="989.3" font-size="11" fill="#747474" textLength="73.5" lengthAdjust="spacingAndGlyphs" font-weight="bold" stroke="#747474" stroke-width=".35">HIFI168.com</text><path d="M1821.6 993.5 Q1820.5 1003 1815.9 1011.3 M1813.6 998.4 L1835.4 998.7 M1827.9 993.5 L1831.9 996.1 M1821.6 1003.8 L1833.1 1003.5 Q1829 1009 1823.9 1012.1 M1822.8 1005 Q1827 1009 1832.5 1011.5 M1841.7 992.9 V1004.4 Q1841 1008.5 1839.4 1011.3 M1838.8 997.5 L1839.4 1001 M1845.1 996.9 L1844 1000.4 M1841.7 1004.4 L1845.1 1010.1 M1846.8 997.5 L1860 995.8 M1850.8 993.8 L1849.7 1002.1 M1847.4 1003.8 L1860.6 1002.1 M1855.4 994.6 Q1855.8 1001.5 1861.2 1003.8 M1846.8 1007.5 L1861.2 1007.2 M1850.6 1007.5 L1848.3 1012.1 M1856 1007.5 V1012.1 M1866 1012.4 V994.6 H1885.8 V1012.1 M1868.6 999.8 L1875.5 1010.1 M1875.5 999.2 L1868 1011.3 M1877.2 999.8 L1883.5 1010.1 M1883.5 999.2 L1876.6 1011.3" stroke="#727272" stroke-width="1.35" fill="none" stroke-linecap="round" stroke-linejoin="round"/></svg>
</body></html>
